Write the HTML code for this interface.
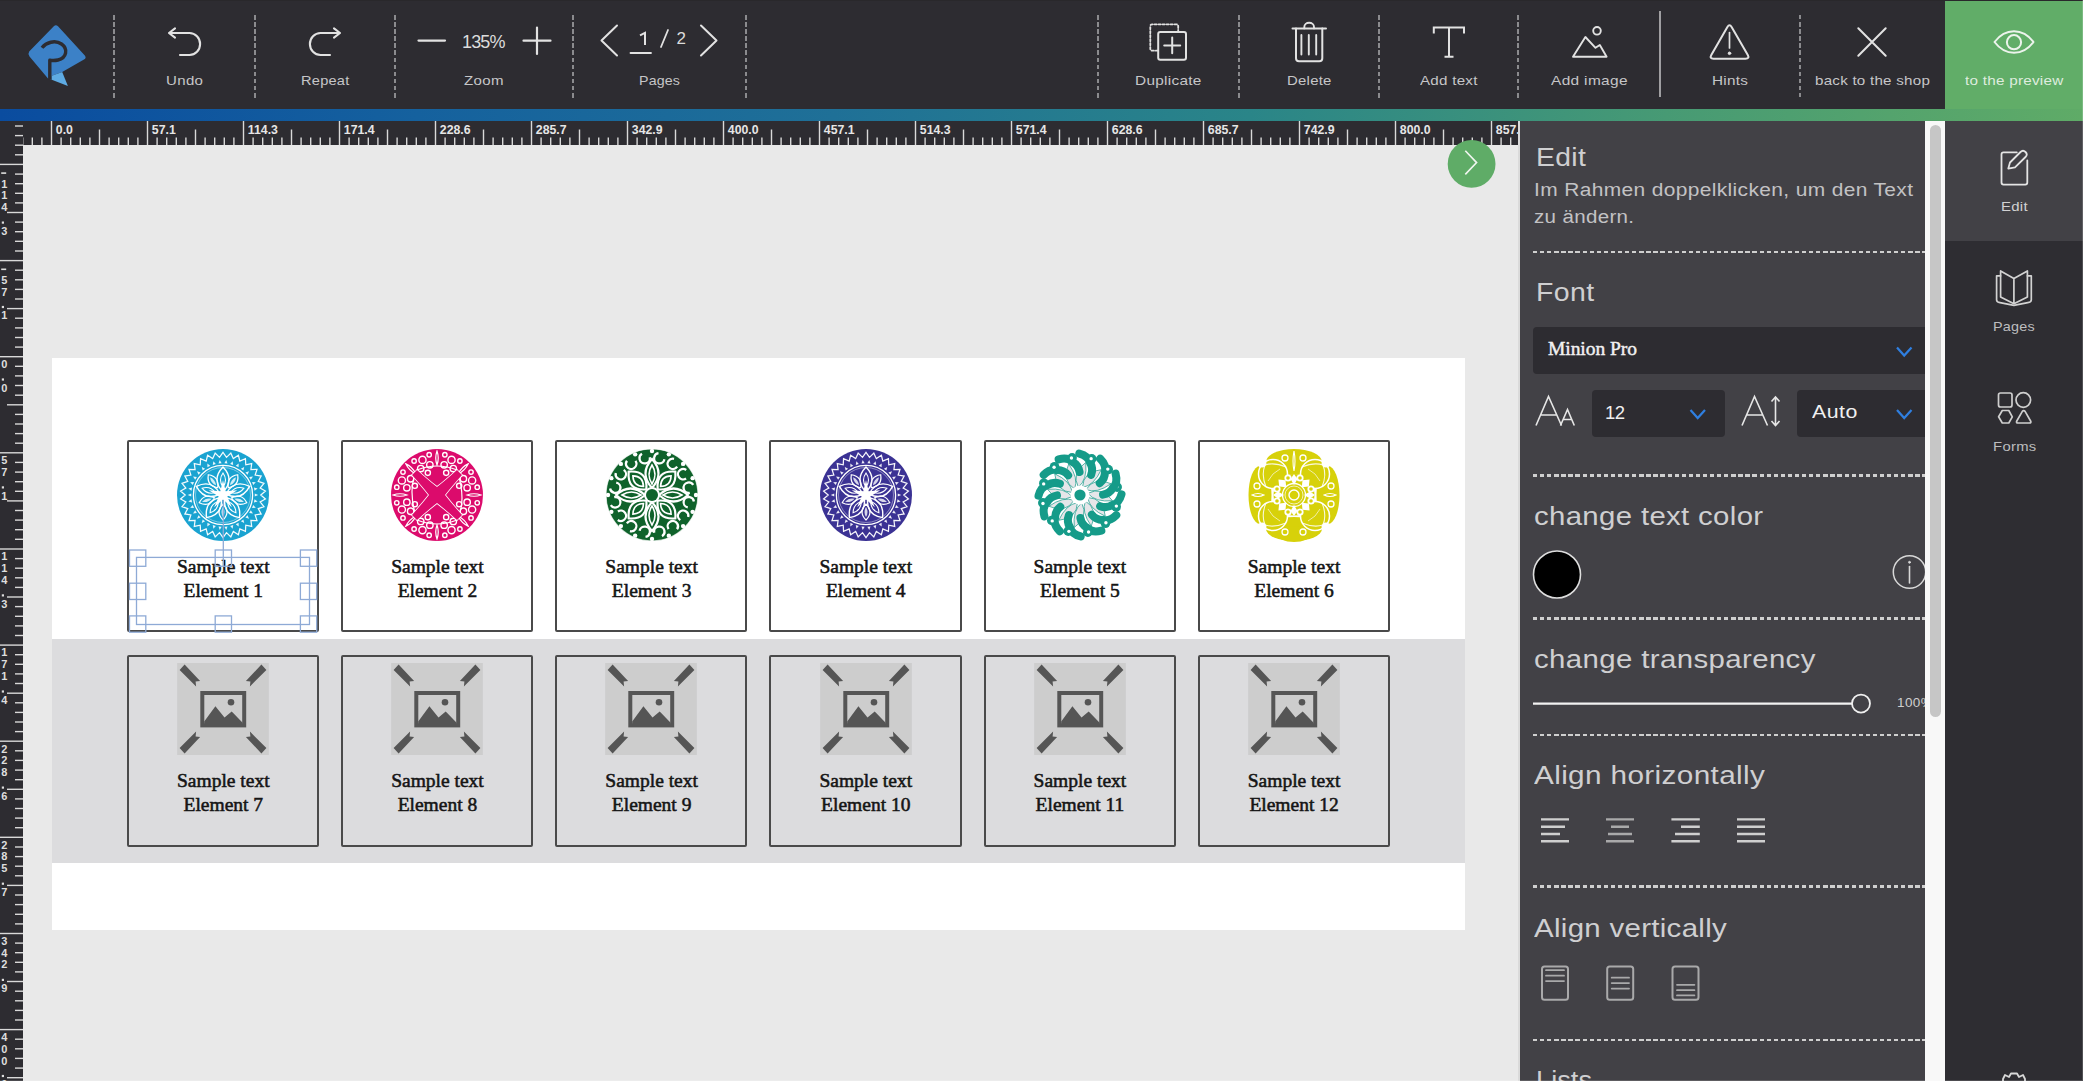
<!DOCTYPE html>
<html><head><meta charset="utf-8"><title>Editor</title>
<style>
html,body{margin:0;padding:0;}
body{width:2083px;height:1081px;overflow:hidden;position:relative;background:#e9e9e9;font-family:"Liberation Sans",sans-serif;}
.a{position:absolute;}
.t{position:absolute;white-space:nowrap;line-height:1;}
#top{left:0;top:0;width:2083px;height:109px;background:#2d2c31;border-top:1px solid #29282b;box-sizing:border-box;}
#prev{left:1945px;top:1px;width:138px;height:108px;background:#61ad68;}
#grad{left:0;top:109px;width:2083px;height:12px;background:linear-gradient(to right,#0a4c9f 0%,#15619e 20%,#1f7097 40%,#2a8588 60%,#479a74 80%,#5fab67 100%);}
.hr{position:absolute;left:0;top:121px;background:#2d2c31;}
.hr line,.vr line{stroke:#d9d9d9;stroke-width:1.4;}
.hr text{font-family:"Liberation Sans",sans-serif;font-weight:bold;font-size:12.3px;fill:#e6e6e6;}
.vr{position:absolute;left:0;top:121px;background:#2d2c31;}
.vr text{font-family:"Liberation Sans",sans-serif;font-weight:bold;font-size:11px;fill:#dedede;}
.sep{position:absolute;width:2px;background:repeating-linear-gradient(to bottom,#8b8b8e 0,#8b8b8e 4.5px,transparent 4.5px,transparent 7.1px);}
.lbl{position:absolute;white-space:nowrap;line-height:1;font-size:13px;color:#d4d4d6;}
.ic{position:absolute;overflow:visible;}
.ic{fill:none;stroke:#e2e2e2;stroke-width:2;stroke-linecap:round;stroke-linejoin:round;}
#canvas{left:23px;top:145px;width:1495px;height:936px;background:#e9e9e9;}
#page{left:52px;top:358px;width:1413px;height:572px;background:#fff;}
#band{left:52px;top:639px;width:1413px;height:224px;background:#dcdcde;}
.card{position:absolute;width:188.2px;height:188.2px;border:2.3px solid #4a4a4a;border-radius:2px;}
.st{position:absolute;width:192px;text-align:center;font-family:"Liberation Serif",serif;font-size:19.5px;line-height:24px;color:#1a1a1a;}
#panel{left:1520px;top:121px;width:405px;height:960px;background:#424146;}
#strip{left:1518px;top:121px;width:2px;height:960px;background:#dadada;}
#sbar{left:1925px;top:121px;width:20px;height:960px;background:#f8f8f8;}
#thumb{left:1930px;top:125px;width:11px;height:592px;background:#c6c6c6;border-radius:6px;}
#side{left:1945px;top:121px;width:138px;height:960px;background:#2e2d32;}
#sideedit{left:1945px;top:121px;width:138px;height:120px;background:#424146;}
.ph{position:absolute;color:#e4e4e4;white-space:nowrap;line-height:1;}
.dash{position:absolute;left:1533px;width:392px;height:2.5px;background:repeating-linear-gradient(to right,#cfcfcf 0,#cfcfcf 4.3px,transparent 4.3px,transparent 7.08px);}
.sel{position:absolute;border-radius:4px;background:#2d2c31;}
</style></head><body>
<div class="a" id="top"></div>
<div class="a" id="prev"></div>
<div class="a" id="grad"></div>
<svg class="ic" style="left:0;top:0" width="2083" height="109" viewBox="0 0 2083 109">
<g transform="translate(20,15)" style="stroke:none">
 <path d="M9.2,36.6 L33.8,11.2 Q35.9,9.3 38,11.2 L64.8,40.5 Q66.8,43 64,44.5 L42.2,57 L31.8,60.8 L31.8,64.8 L28,63.5 L9.5,41.4 Q7.6,39 9.2,36.6 Z" style="fill:#3c81c7;stroke:none"/>
 <path d="M31.8,60.8 L42.2,57 L47.9,70.9 L31.8,64.8 Z" style="fill:#5eabe3;stroke:none"/>
 <path d="M22,32.8 C26,27.5 35,24.5 41.5,29 C48.5,34 46.5,43.2 38,45 C35,45.7 32,45.6 29.8,45.2 L29.8,64.5" style="fill:none;stroke:#2d2c31;stroke-width:3.4;stroke-linecap:butt"/>
</g>
<path d="M169,33 H189.5 A10.6,11 0 0 1 189.5,55 H180 M175,28.4 L169,33 L175,37.6" style="stroke-width:2.1"/>
<path d="M340,33 H320.5 A10.6,11 0 0 0 320.5,55 H330 M334,28.4 L340,33 L334,37.6" style="stroke-width:2.1"/>
<path d="M418.5,40.6 H445" style="stroke-width:2.2"/>
<path d="M523.5,40.7 H550.5 M537,27.5 V54" style="stroke-width:2.2"/>
<path d="M617,25.5 L601.5,40.5 L617,55.5" style="stroke-width:2"/>
<path d="M701,25.5 L716.5,40.5 L701,55.5" style="stroke-width:2"/>
<path d="M630.5,53 H651" style="stroke-width:1.8"/>
<path d="M640,35.3 L645,32.8 V45" style="stroke-width:2;stroke-linecap:butt;stroke-linejoin:miter"/>
<path d="M661,47 L668,30" style="stroke-width:1.8"/>
<!-- duplicate -->
<path d="M1158,50.7 H1152.3 Q1150.3,50.7 1150.3,48.7 V26.3 Q1150.3,24.3 1152.3,24.3 H1176.2 Q1178.2,24.3 1178.2,26.3 V32" style="stroke-dasharray:2.2 1.8;stroke-width:1.8"/>
<rect x="1158.2" y="32.1" width="27.8" height="27.7" rx="2" style="stroke-width:2"/>
<path d="M1164.2,45.4 H1180.2 M1172.2,37.6 V53.2" style="stroke-width:2"/>
<!-- trash -->
<path d="M1292.5,28.6 H1326" style="stroke-width:2"/>
<path d="M1304.3,28.4 V27 A4.85,4.2 0 0 1 1314,27 V28.4" style="stroke-width:1.9"/>
<path d="M1296,28.6 L1296,58.3 Q1296,61.2 1299,61.2 H1319.3 Q1322.3,61.2 1322.3,58.3 V28.6" style="stroke-width:2"/>
<path d="M1301.4,35 V54.5 M1308.8,35 V54.5 M1316.2,35 V54.5" style="stroke-width:1.9"/>
<!-- T -->
<path d="M1433.8,33.5 V27.5 H1464 V33.5 M1449,27.5 V56.8 M1444.5,56.8 H1453.5" style="stroke-width:2;stroke-linecap:butt;stroke-linejoin:miter"/>
<!-- add image -->
<path d="M1573,56.8 L1585.4,37 L1595.5,47.8 L1599.8,45 L1606.6,56.8 Z" style="stroke-width:1.9"/>
<circle cx="1597" cy="30.8" r="3.8" style="stroke-width:1.9"/>
<!-- hints -->
<path d="M1727.4,27 Q1729.5,23.6 1731.6,27 L1747.8,55 Q1749.8,58.8 1745.5,58.8 H1713.5 Q1709.3,58.8 1711.3,55 Z" style="stroke-width:2"/>
<path d="M1729.5,32.5 V48" style="stroke-width:1.7"/>
<circle cx="1729.5" cy="53.3" r="1.3" style="fill:#e2e2e2;stroke-width:1"/>
<!-- X -->
<path d="M1858.3,28.3 L1885.7,55.7 M1885.7,28.3 L1858.3,55.7" style="stroke-width:2"/>
<!-- eye -->
<path d="M1994.5,42 C2001,33.5 2008,31.3 2014,31.3 C2020,31.3 2027,33.5 2033.5,42 C2027,50.5 2020,52.8 2014,52.8 C2008,52.8 2001,50.5 1994.5,42 Z" style="stroke-width:2;stroke:#ecf3ec"/>
<circle cx="2014" cy="42.2" r="7.1" style="stroke-width:2;stroke:#ecf3ec"/>
<line x1="1660" y1="11" x2="1660" y2="97" style="stroke:#bdbdbf;stroke-width:1.6;stroke-linecap:butt"/>
</svg>
<div class="sep" style="left:113.0px;top:14.5px;height:83px"></div>
<div class="sep" style="left:254.0px;top:14.5px;height:83px"></div>
<div class="sep" style="left:394.0px;top:14.5px;height:83px"></div>
<div class="sep" style="left:571.5px;top:14.5px;height:83px"></div>
<div class="sep" style="left:745.0px;top:14.5px;height:83px"></div>
<div class="sep" style="left:1096.5px;top:14.5px;height:83px"></div>
<div class="sep" style="left:1238.0px;top:14.5px;height:83px"></div>
<div class="sep" style="left:1378.0px;top:14.5px;height:83px"></div>
<div class="sep" style="left:1517.3px;top:14.5px;height:83px"></div>
<div class="sep" style="left:1799px;top:15px;height:82px"></div>
<div class="t" style="left:166.00px;top:74.23px;font-family:'Liberation Sans',sans-serif;font-weight:normal;font-size:13.2px;letter-spacing:0.319px;color:#c6c6c8;transform:scaleX(1.1382);transform-origin:0 0;">Undo</div>
<div class="t" style="left:300.70px;top:74.23px;font-family:'Liberation Sans',sans-serif;font-weight:normal;font-size:13.2px;letter-spacing:0.208px;color:#c6c6c8;transform:scaleX(1.1081);transform-origin:0 0;">Repeat</div>
<div class="t" style="left:464.00px;top:74.23px;font-family:'Liberation Sans',sans-serif;font-weight:normal;font-size:13.2px;letter-spacing:0.348px;color:#c6c6c8;transform:scaleX(1.1410);transform-origin:0 0;">Zoom</div>
<div class="t" style="left:639.00px;top:74.23px;font-family:'Liberation Sans',sans-serif;font-weight:normal;font-size:13.2px;letter-spacing:0.165px;color:#c6c6c8;transform:scaleX(1.0758);transform-origin:0 0;">Pages</div>
<div class="t" style="left:1135.00px;top:74.23px;font-family:'Liberation Sans',sans-serif;font-weight:normal;font-size:13.2px;letter-spacing:0.245px;color:#c6c6c8;transform:scaleX(1.1664);transform-origin:0 0;">Duplicate</div>
<div class="t" style="left:1286.60px;top:74.23px;font-family:'Liberation Sans',sans-serif;font-weight:normal;font-size:13.2px;letter-spacing:0.221px;color:#c6c6c8;transform:scaleX(1.1311);transform-origin:0 0;">Delete</div>
<div class="t" style="left:1420.00px;top:74.23px;font-family:'Liberation Sans',sans-serif;font-weight:normal;font-size:13.2px;letter-spacing:0.225px;color:#c6c6c8;transform:scaleX(1.1494);transform-origin:0 0;">Add text</div>
<div class="t" style="left:1551.00px;top:74.23px;font-family:'Liberation Sans',sans-serif;font-weight:normal;font-size:13.2px;letter-spacing:0.288px;color:#c6c6c8;transform:scaleX(1.1712);transform-origin:0 0;">Add image</div>
<div class="t" style="left:1712.00px;top:74.23px;font-family:'Liberation Sans',sans-serif;font-weight:normal;font-size:13.2px;letter-spacing:0.257px;color:#c6c6c8;transform:scaleX(1.1584);transform-origin:0 0;">Hints</div>
<div class="t" style="left:1814.60px;top:74.23px;font-family:'Liberation Sans',sans-serif;font-weight:normal;font-size:13.2px;letter-spacing:0.209px;color:#c6c6c8;transform:scaleX(1.1491);transform-origin:0 0;">back to the shop</div>
<div class="t" style="left:1964.60px;top:74.23px;font-family:'Liberation Sans',sans-serif;font-weight:normal;font-size:13.2px;letter-spacing:0.215px;color:#deecdf;transform:scaleX(1.1571);transform-origin:0 0;">to the preview</div>
<div class="t" style="left:462.00px;top:33.16px;font-family:'Liberation Sans',sans-serif;font-weight:normal;font-size:18px;letter-spacing:-0.850px;color:#dcdcdc;">135%</div>
<div class="t" style="left:676.50px;top:30.31px;font-family:'Liberation Sans',sans-serif;font-weight:normal;font-size:17px;letter-spacing:0.000px;color:#dcdcdc;">2</div>
<svg class="hr" width="1518" height="24" viewBox="0 0 1518 24"><line x1="22.7" y1="16.5" x2="22.7" y2="24"/>
<line x1="32.3" y1="16.5" x2="32.3" y2="24"/>
<line x1="41.9" y1="16.5" x2="41.9" y2="24"/>
<line x1="51.5" y1="0" x2="51.5" y2="24"/>
<text x="55.8" y="13.2">0.0</text>
<line x1="61.1" y1="16.5" x2="61.1" y2="24"/>
<line x1="70.7" y1="16.5" x2="70.7" y2="24"/>
<line x1="80.3" y1="16.5" x2="80.3" y2="24"/>
<line x1="89.9" y1="16.5" x2="89.9" y2="24"/>
<line x1="99.5" y1="8.5" x2="99.5" y2="24"/>
<line x1="109.1" y1="16.5" x2="109.1" y2="24"/>
<line x1="118.7" y1="16.5" x2="118.7" y2="24"/>
<line x1="128.3" y1="16.5" x2="128.3" y2="24"/>
<line x1="137.9" y1="16.5" x2="137.9" y2="24"/>
<line x1="147.5" y1="0" x2="147.5" y2="24"/>
<text x="151.8" y="13.2">57.1</text>
<line x1="157.1" y1="16.5" x2="157.1" y2="24"/>
<line x1="166.7" y1="16.5" x2="166.7" y2="24"/>
<line x1="176.3" y1="16.5" x2="176.3" y2="24"/>
<line x1="185.9" y1="16.5" x2="185.9" y2="24"/>
<line x1="195.5" y1="8.5" x2="195.5" y2="24"/>
<line x1="205.1" y1="16.5" x2="205.1" y2="24"/>
<line x1="214.7" y1="16.5" x2="214.7" y2="24"/>
<line x1="224.3" y1="16.5" x2="224.3" y2="24"/>
<line x1="233.9" y1="16.5" x2="233.9" y2="24"/>
<line x1="243.5" y1="0" x2="243.5" y2="24"/>
<text x="247.8" y="13.2">114.3</text>
<line x1="253.1" y1="16.5" x2="253.1" y2="24"/>
<line x1="262.7" y1="16.5" x2="262.7" y2="24"/>
<line x1="272.3" y1="16.5" x2="272.3" y2="24"/>
<line x1="281.9" y1="16.5" x2="281.9" y2="24"/>
<line x1="291.5" y1="8.5" x2="291.5" y2="24"/>
<line x1="301.1" y1="16.5" x2="301.1" y2="24"/>
<line x1="310.7" y1="16.5" x2="310.7" y2="24"/>
<line x1="320.3" y1="16.5" x2="320.3" y2="24"/>
<line x1="329.9" y1="16.5" x2="329.9" y2="24"/>
<line x1="339.5" y1="0" x2="339.5" y2="24"/>
<text x="343.8" y="13.2">171.4</text>
<line x1="349.1" y1="16.5" x2="349.1" y2="24"/>
<line x1="358.7" y1="16.5" x2="358.7" y2="24"/>
<line x1="368.3" y1="16.5" x2="368.3" y2="24"/>
<line x1="377.9" y1="16.5" x2="377.9" y2="24"/>
<line x1="387.5" y1="8.5" x2="387.5" y2="24"/>
<line x1="397.1" y1="16.5" x2="397.1" y2="24"/>
<line x1="406.7" y1="16.5" x2="406.7" y2="24"/>
<line x1="416.3" y1="16.5" x2="416.3" y2="24"/>
<line x1="425.9" y1="16.5" x2="425.9" y2="24"/>
<line x1="435.5" y1="0" x2="435.5" y2="24"/>
<text x="439.8" y="13.2">228.6</text>
<line x1="445.1" y1="16.5" x2="445.1" y2="24"/>
<line x1="454.7" y1="16.5" x2="454.7" y2="24"/>
<line x1="464.3" y1="16.5" x2="464.3" y2="24"/>
<line x1="473.9" y1="16.5" x2="473.9" y2="24"/>
<line x1="483.5" y1="8.5" x2="483.5" y2="24"/>
<line x1="493.1" y1="16.5" x2="493.1" y2="24"/>
<line x1="502.7" y1="16.5" x2="502.7" y2="24"/>
<line x1="512.3" y1="16.5" x2="512.3" y2="24"/>
<line x1="521.9" y1="16.5" x2="521.9" y2="24"/>
<line x1="531.5" y1="0" x2="531.5" y2="24"/>
<text x="535.8" y="13.2">285.7</text>
<line x1="541.1" y1="16.5" x2="541.1" y2="24"/>
<line x1="550.7" y1="16.5" x2="550.7" y2="24"/>
<line x1="560.3" y1="16.5" x2="560.3" y2="24"/>
<line x1="569.9" y1="16.5" x2="569.9" y2="24"/>
<line x1="579.5" y1="8.5" x2="579.5" y2="24"/>
<line x1="589.1" y1="16.5" x2="589.1" y2="24"/>
<line x1="598.7" y1="16.5" x2="598.7" y2="24"/>
<line x1="608.3" y1="16.5" x2="608.3" y2="24"/>
<line x1="617.9" y1="16.5" x2="617.9" y2="24"/>
<line x1="627.5" y1="0" x2="627.5" y2="24"/>
<text x="631.8" y="13.2">342.9</text>
<line x1="637.1" y1="16.5" x2="637.1" y2="24"/>
<line x1="646.7" y1="16.5" x2="646.7" y2="24"/>
<line x1="656.3" y1="16.5" x2="656.3" y2="24"/>
<line x1="665.9" y1="16.5" x2="665.9" y2="24"/>
<line x1="675.5" y1="8.5" x2="675.5" y2="24"/>
<line x1="685.1" y1="16.5" x2="685.1" y2="24"/>
<line x1="694.7" y1="16.5" x2="694.7" y2="24"/>
<line x1="704.3" y1="16.5" x2="704.3" y2="24"/>
<line x1="713.9" y1="16.5" x2="713.9" y2="24"/>
<line x1="723.5" y1="0" x2="723.5" y2="24"/>
<text x="727.8" y="13.2">400.0</text>
<line x1="733.1" y1="16.5" x2="733.1" y2="24"/>
<line x1="742.7" y1="16.5" x2="742.7" y2="24"/>
<line x1="752.3" y1="16.5" x2="752.3" y2="24"/>
<line x1="761.9" y1="16.5" x2="761.9" y2="24"/>
<line x1="771.5" y1="8.5" x2="771.5" y2="24"/>
<line x1="781.1" y1="16.5" x2="781.1" y2="24"/>
<line x1="790.7" y1="16.5" x2="790.7" y2="24"/>
<line x1="800.3" y1="16.5" x2="800.3" y2="24"/>
<line x1="809.9" y1="16.5" x2="809.9" y2="24"/>
<line x1="819.5" y1="0" x2="819.5" y2="24"/>
<text x="823.8" y="13.2">457.1</text>
<line x1="829.1" y1="16.5" x2="829.1" y2="24"/>
<line x1="838.7" y1="16.5" x2="838.7" y2="24"/>
<line x1="848.3" y1="16.5" x2="848.3" y2="24"/>
<line x1="857.9" y1="16.5" x2="857.9" y2="24"/>
<line x1="867.5" y1="8.5" x2="867.5" y2="24"/>
<line x1="877.1" y1="16.5" x2="877.1" y2="24"/>
<line x1="886.7" y1="16.5" x2="886.7" y2="24"/>
<line x1="896.3" y1="16.5" x2="896.3" y2="24"/>
<line x1="905.9" y1="16.5" x2="905.9" y2="24"/>
<line x1="915.5" y1="0" x2="915.5" y2="24"/>
<text x="919.8" y="13.2">514.3</text>
<line x1="925.1" y1="16.5" x2="925.1" y2="24"/>
<line x1="934.7" y1="16.5" x2="934.7" y2="24"/>
<line x1="944.3" y1="16.5" x2="944.3" y2="24"/>
<line x1="953.9" y1="16.5" x2="953.9" y2="24"/>
<line x1="963.5" y1="8.5" x2="963.5" y2="24"/>
<line x1="973.1" y1="16.5" x2="973.1" y2="24"/>
<line x1="982.7" y1="16.5" x2="982.7" y2="24"/>
<line x1="992.3" y1="16.5" x2="992.3" y2="24"/>
<line x1="1001.9" y1="16.5" x2="1001.9" y2="24"/>
<line x1="1011.5" y1="0" x2="1011.5" y2="24"/>
<text x="1015.8" y="13.2">571.4</text>
<line x1="1021.1" y1="16.5" x2="1021.1" y2="24"/>
<line x1="1030.7" y1="16.5" x2="1030.7" y2="24"/>
<line x1="1040.3" y1="16.5" x2="1040.3" y2="24"/>
<line x1="1049.9" y1="16.5" x2="1049.9" y2="24"/>
<line x1="1059.5" y1="8.5" x2="1059.5" y2="24"/>
<line x1="1069.1" y1="16.5" x2="1069.1" y2="24"/>
<line x1="1078.7" y1="16.5" x2="1078.7" y2="24"/>
<line x1="1088.3" y1="16.5" x2="1088.3" y2="24"/>
<line x1="1097.9" y1="16.5" x2="1097.9" y2="24"/>
<line x1="1107.5" y1="0" x2="1107.5" y2="24"/>
<text x="1111.8" y="13.2">628.6</text>
<line x1="1117.1" y1="16.5" x2="1117.1" y2="24"/>
<line x1="1126.7" y1="16.5" x2="1126.7" y2="24"/>
<line x1="1136.3" y1="16.5" x2="1136.3" y2="24"/>
<line x1="1145.9" y1="16.5" x2="1145.9" y2="24"/>
<line x1="1155.5" y1="8.5" x2="1155.5" y2="24"/>
<line x1="1165.1" y1="16.5" x2="1165.1" y2="24"/>
<line x1="1174.7" y1="16.5" x2="1174.7" y2="24"/>
<line x1="1184.3" y1="16.5" x2="1184.3" y2="24"/>
<line x1="1193.9" y1="16.5" x2="1193.9" y2="24"/>
<line x1="1203.5" y1="0" x2="1203.5" y2="24"/>
<text x="1207.8" y="13.2">685.7</text>
<line x1="1213.1" y1="16.5" x2="1213.1" y2="24"/>
<line x1="1222.7" y1="16.5" x2="1222.7" y2="24"/>
<line x1="1232.3" y1="16.5" x2="1232.3" y2="24"/>
<line x1="1241.9" y1="16.5" x2="1241.9" y2="24"/>
<line x1="1251.5" y1="8.5" x2="1251.5" y2="24"/>
<line x1="1261.1" y1="16.5" x2="1261.1" y2="24"/>
<line x1="1270.7" y1="16.5" x2="1270.7" y2="24"/>
<line x1="1280.3" y1="16.5" x2="1280.3" y2="24"/>
<line x1="1289.9" y1="16.5" x2="1289.9" y2="24"/>
<line x1="1299.5" y1="0" x2="1299.5" y2="24"/>
<text x="1303.8" y="13.2">742.9</text>
<line x1="1309.1" y1="16.5" x2="1309.1" y2="24"/>
<line x1="1318.7" y1="16.5" x2="1318.7" y2="24"/>
<line x1="1328.3" y1="16.5" x2="1328.3" y2="24"/>
<line x1="1337.9" y1="16.5" x2="1337.9" y2="24"/>
<line x1="1347.5" y1="8.5" x2="1347.5" y2="24"/>
<line x1="1357.1" y1="16.5" x2="1357.1" y2="24"/>
<line x1="1366.7" y1="16.5" x2="1366.7" y2="24"/>
<line x1="1376.3" y1="16.5" x2="1376.3" y2="24"/>
<line x1="1385.9" y1="16.5" x2="1385.9" y2="24"/>
<line x1="1395.5" y1="0" x2="1395.5" y2="24"/>
<text x="1399.8" y="13.2">800.0</text>
<line x1="1405.1" y1="16.5" x2="1405.1" y2="24"/>
<line x1="1414.7" y1="16.5" x2="1414.7" y2="24"/>
<line x1="1424.3" y1="16.5" x2="1424.3" y2="24"/>
<line x1="1433.9" y1="16.5" x2="1433.9" y2="24"/>
<line x1="1443.5" y1="8.5" x2="1443.5" y2="24"/>
<line x1="1453.1" y1="16.5" x2="1453.1" y2="24"/>
<line x1="1462.7" y1="16.5" x2="1462.7" y2="24"/>
<line x1="1472.3" y1="16.5" x2="1472.3" y2="24"/>
<line x1="1481.9" y1="16.5" x2="1481.9" y2="24"/>
<line x1="1491.5" y1="0" x2="1491.5" y2="24"/>
<text x="1495.8" y="13.2">857.1</text>
<line x1="1501.1" y1="16.5" x2="1501.1" y2="24"/>
<line x1="1510.7" y1="16.5" x2="1510.7" y2="24"/></svg>
<svg class="vr" width="23" height="960" viewBox="0 0 23 960"><line x1="0" y1="-52.7" x2="23" y2="-52.7"/>
<line x1="15" y1="-43.1" x2="23" y2="-43.1"/>
<line x1="15" y1="-33.5" x2="23" y2="-33.5"/>
<line x1="15" y1="-23.9" x2="23" y2="-23.9"/>
<line x1="15" y1="-14.2" x2="23" y2="-14.2"/>
<line x1="7" y1="-4.6" x2="23" y2="-4.6"/>
<line x1="15" y1="5.0" x2="23" y2="5.0"/>
<line x1="15" y1="14.6" x2="23" y2="14.6"/>
<line x1="15" y1="24.2" x2="23" y2="24.2"/>
<line x1="15" y1="33.8" x2="23" y2="33.8"/>
<line x1="0" y1="43.4" x2="23" y2="43.4"/>
<rect x="1.2" y="51.3" width="5" height="1.6" fill="#dcdcdc"/>
<text x="1.2" y="66.5">1</text>
<text x="1.2" y="78.3">1</text>
<text x="1.2" y="90.1">4</text>
<rect x="1.8" y="100.5" width="2.2" height="2.2" fill="#dcdcdc"/>
<text x="1.2" y="113.7">3</text>
<line x1="15" y1="53.1" x2="23" y2="53.1"/>
<line x1="15" y1="62.7" x2="23" y2="62.7"/>
<line x1="15" y1="72.3" x2="23" y2="72.3"/>
<line x1="15" y1="81.9" x2="23" y2="81.9"/>
<line x1="7" y1="91.5" x2="23" y2="91.5"/>
<line x1="15" y1="101.1" x2="23" y2="101.1"/>
<line x1="15" y1="110.7" x2="23" y2="110.7"/>
<line x1="15" y1="120.3" x2="23" y2="120.3"/>
<line x1="15" y1="130.0" x2="23" y2="130.0"/>
<line x1="0" y1="139.6" x2="23" y2="139.6"/>
<rect x="1.2" y="147.5" width="5" height="1.6" fill="#dcdcdc"/>
<text x="1.2" y="162.7">5</text>
<text x="1.2" y="174.5">7</text>
<rect x="1.8" y="184.9" width="2.2" height="2.2" fill="#dcdcdc"/>
<text x="1.2" y="198.1">1</text>
<line x1="15" y1="149.2" x2="23" y2="149.2"/>
<line x1="15" y1="158.8" x2="23" y2="158.8"/>
<line x1="15" y1="168.4" x2="23" y2="168.4"/>
<line x1="15" y1="178.0" x2="23" y2="178.0"/>
<line x1="7" y1="187.6" x2="23" y2="187.6"/>
<line x1="15" y1="197.2" x2="23" y2="197.2"/>
<line x1="15" y1="206.9" x2="23" y2="206.9"/>
<line x1="15" y1="216.5" x2="23" y2="216.5"/>
<line x1="15" y1="226.1" x2="23" y2="226.1"/>
<line x1="0" y1="235.7" x2="23" y2="235.7"/>
<text x="1.2" y="247.0">0</text>
<rect x="1.8" y="257.4" width="2.2" height="2.2" fill="#dcdcdc"/>
<text x="1.2" y="270.6">0</text>
<line x1="15" y1="245.3" x2="23" y2="245.3"/>
<line x1="15" y1="254.9" x2="23" y2="254.9"/>
<line x1="15" y1="264.5" x2="23" y2="264.5"/>
<line x1="15" y1="274.2" x2="23" y2="274.2"/>
<line x1="7" y1="283.8" x2="23" y2="283.8"/>
<line x1="15" y1="293.4" x2="23" y2="293.4"/>
<line x1="15" y1="303.0" x2="23" y2="303.0"/>
<line x1="15" y1="312.6" x2="23" y2="312.6"/>
<line x1="15" y1="322.2" x2="23" y2="322.2"/>
<line x1="0" y1="331.8" x2="23" y2="331.8"/>
<text x="1.2" y="343.1">5</text>
<text x="1.2" y="354.9">7</text>
<rect x="1.8" y="365.3" width="2.2" height="2.2" fill="#dcdcdc"/>
<text x="1.2" y="378.5">1</text>
<line x1="15" y1="341.4" x2="23" y2="341.4"/>
<line x1="15" y1="351.1" x2="23" y2="351.1"/>
<line x1="15" y1="360.7" x2="23" y2="360.7"/>
<line x1="15" y1="370.3" x2="23" y2="370.3"/>
<line x1="7" y1="379.9" x2="23" y2="379.9"/>
<line x1="15" y1="389.5" x2="23" y2="389.5"/>
<line x1="15" y1="399.1" x2="23" y2="399.1"/>
<line x1="15" y1="408.7" x2="23" y2="408.7"/>
<line x1="15" y1="418.3" x2="23" y2="418.3"/>
<line x1="0" y1="428.0" x2="23" y2="428.0"/>
<text x="1.2" y="439.3">1</text>
<text x="1.2" y="451.1">1</text>
<text x="1.2" y="462.9">4</text>
<rect x="1.8" y="473.3" width="2.2" height="2.2" fill="#dcdcdc"/>
<text x="1.2" y="486.5">3</text>
<line x1="15" y1="437.6" x2="23" y2="437.6"/>
<line x1="15" y1="447.2" x2="23" y2="447.2"/>
<line x1="15" y1="456.8" x2="23" y2="456.8"/>
<line x1="15" y1="466.4" x2="23" y2="466.4"/>
<line x1="7" y1="476.0" x2="23" y2="476.0"/>
<line x1="15" y1="485.6" x2="23" y2="485.6"/>
<line x1="15" y1="495.3" x2="23" y2="495.3"/>
<line x1="15" y1="504.9" x2="23" y2="504.9"/>
<line x1="15" y1="514.5" x2="23" y2="514.5"/>
<line x1="0" y1="524.1" x2="23" y2="524.1"/>
<text x="1.2" y="535.4">1</text>
<text x="1.2" y="547.2">7</text>
<text x="1.2" y="559.0">1</text>
<rect x="1.8" y="569.4" width="2.2" height="2.2" fill="#dcdcdc"/>
<text x="1.2" y="582.6">4</text>
<line x1="15" y1="533.7" x2="23" y2="533.7"/>
<line x1="15" y1="543.3" x2="23" y2="543.3"/>
<line x1="15" y1="552.9" x2="23" y2="552.9"/>
<line x1="15" y1="562.5" x2="23" y2="562.5"/>
<line x1="7" y1="572.2" x2="23" y2="572.2"/>
<line x1="15" y1="581.8" x2="23" y2="581.8"/>
<line x1="15" y1="591.4" x2="23" y2="591.4"/>
<line x1="15" y1="601.0" x2="23" y2="601.0"/>
<line x1="15" y1="610.6" x2="23" y2="610.6"/>
<line x1="0" y1="620.2" x2="23" y2="620.2"/>
<text x="1.2" y="631.5">2</text>
<text x="1.2" y="643.3">2</text>
<text x="1.2" y="655.1">8</text>
<rect x="1.8" y="665.5" width="2.2" height="2.2" fill="#dcdcdc"/>
<text x="1.2" y="678.7">6</text>
<line x1="15" y1="629.8" x2="23" y2="629.8"/>
<line x1="15" y1="639.4" x2="23" y2="639.4"/>
<line x1="15" y1="649.1" x2="23" y2="649.1"/>
<line x1="15" y1="658.7" x2="23" y2="658.7"/>
<line x1="7" y1="668.3" x2="23" y2="668.3"/>
<line x1="15" y1="677.9" x2="23" y2="677.9"/>
<line x1="15" y1="687.5" x2="23" y2="687.5"/>
<line x1="15" y1="697.1" x2="23" y2="697.1"/>
<line x1="15" y1="706.7" x2="23" y2="706.7"/>
<line x1="0" y1="716.3" x2="23" y2="716.3"/>
<text x="1.2" y="727.6">2</text>
<text x="1.2" y="739.4">8</text>
<text x="1.2" y="751.2">5</text>
<rect x="1.8" y="761.6" width="2.2" height="2.2" fill="#dcdcdc"/>
<text x="1.2" y="774.8">7</text>
<line x1="15" y1="726.0" x2="23" y2="726.0"/>
<line x1="15" y1="735.6" x2="23" y2="735.6"/>
<line x1="15" y1="745.2" x2="23" y2="745.2"/>
<line x1="15" y1="754.8" x2="23" y2="754.8"/>
<line x1="7" y1="764.4" x2="23" y2="764.4"/>
<line x1="15" y1="774.0" x2="23" y2="774.0"/>
<line x1="15" y1="783.6" x2="23" y2="783.6"/>
<line x1="15" y1="793.3" x2="23" y2="793.3"/>
<line x1="15" y1="802.9" x2="23" y2="802.9"/>
<line x1="0" y1="812.5" x2="23" y2="812.5"/>
<text x="1.2" y="823.8">3</text>
<text x="1.2" y="835.6">4</text>
<text x="1.2" y="847.4">2</text>
<rect x="1.8" y="857.8" width="2.2" height="2.2" fill="#dcdcdc"/>
<text x="1.2" y="871.0">9</text>
<line x1="15" y1="822.1" x2="23" y2="822.1"/>
<line x1="15" y1="831.7" x2="23" y2="831.7"/>
<line x1="15" y1="841.3" x2="23" y2="841.3"/>
<line x1="15" y1="850.9" x2="23" y2="850.9"/>
<line x1="7" y1="860.5" x2="23" y2="860.5"/>
<line x1="15" y1="870.2" x2="23" y2="870.2"/>
<line x1="15" y1="879.8" x2="23" y2="879.8"/>
<line x1="15" y1="889.4" x2="23" y2="889.4"/>
<line x1="15" y1="899.0" x2="23" y2="899.0"/>
<line x1="0" y1="908.6" x2="23" y2="908.6"/>
<text x="1.2" y="919.9">4</text>
<text x="1.2" y="931.7">0</text>
<text x="1.2" y="943.5">0</text>
<rect x="1.8" y="953.9" width="2.2" height="2.2" fill="#dcdcdc"/>
<text x="1.2" y="967.1">0</text>
<line x1="15" y1="918.2" x2="23" y2="918.2"/>
<line x1="15" y1="927.8" x2="23" y2="927.8"/>
<line x1="15" y1="937.4" x2="23" y2="937.4"/>
<line x1="15" y1="947.1" x2="23" y2="947.1"/>
<line x1="7" y1="956.7" x2="23" y2="956.7"/>
<line x1="15" y1="966.3" x2="23" y2="966.3"/>
<line x1="15" y1="975.9" x2="23" y2="975.9"/>
<line x1="15" y1="985.5" x2="23" y2="985.5"/>
<line x1="15" y1="995.1" x2="23" y2="995.1"/>
<line x1="0" y1="1004.7" x2="23" y2="1004.7"/>
<text x="1.2" y="1016.0">4</text>
<text x="1.2" y="1027.8">5</text>
<text x="1.2" y="1039.6">7</text>
<rect x="1.8" y="1050.0" width="2.2" height="2.2" fill="#dcdcdc"/>
<text x="1.2" y="1063.2">1</text>
<line x1="15" y1="1014.4" x2="23" y2="1014.4"/>
<line x1="15" y1="1024.0" x2="23" y2="1024.0"/>
<line x1="15" y1="1033.6" x2="23" y2="1033.6"/>
<line x1="15" y1="1043.2" x2="23" y2="1043.2"/>
<line x1="7" y1="1052.8" x2="23" y2="1052.8"/>
<line x1="15" y1="1062.4" x2="23" y2="1062.4"/>
<line x1="15" y1="1072.0" x2="23" y2="1072.0"/>
<line x1="15" y1="1081.6" x2="23" y2="1081.6"/>
<line x1="15" y1="1091.3" x2="23" y2="1091.3"/></svg>
<div class="a" id="page"></div>
<div class="a" id="band"></div>
<div class="card" style="left:127.00px;top:440px"></div>
<svg class="a" style="left:175.30px;top:446.5px" width="96" height="96" viewBox="-48 -48 96 96"><circle r="46" fill="#1aa3d1"/><path d="M0.00,-42.60 L3.49,-37.64 L7.83,-41.87 L10.34,-36.36 L15.39,-39.72 L16.85,-33.84 L22.43,-36.22 L22.78,-30.17 L28.70,-31.48 L27.93,-25.47 L34.00,-25.67 L32.14,-19.90 L38.13,-18.99 L35.25,-13.65 L40.97,-11.66 L37.16,-6.95 L42.42,-3.93 L37.80,0.00 L42.42,3.93 L37.16,6.95 L40.97,11.66 L35.25,13.65 L38.13,18.99 L32.14,19.90 L34.00,25.67 L27.93,25.47 L28.70,31.48 L22.78,30.17 L22.43,36.22 L16.85,33.84 L15.39,39.72 L10.34,36.36 L7.83,41.87 L3.49,37.64 L0.00,42.60 L-3.49,37.64 L-7.83,41.87 L-10.34,36.36 L-15.39,39.72 L-16.85,33.84 L-22.43,36.22 L-22.78,30.17 L-28.70,31.48 L-27.93,25.47 L-34.00,25.67 L-32.14,19.90 L-38.13,18.99 L-35.25,13.65 L-40.97,11.66 L-37.16,6.95 L-42.42,3.93 L-37.80,0.00 L-42.42,-3.93 L-37.16,-6.95 L-40.97,-11.66 L-35.25,-13.65 L-38.13,-18.99 L-32.14,-19.90 L-34.00,-25.67 L-27.93,-25.47 L-28.70,-31.48 L-22.78,-30.17 L-22.43,-36.22 L-16.85,-33.84 L-15.39,-39.72 L-10.34,-36.36 L-7.83,-41.87 L-3.49,-37.64 Z" fill="none" stroke="#fff" stroke-width="1.25" opacity="0.95"/><path d="M3.25,-35.05 L1.35,-31.77 L4.51,-31.48 Z" fill="#fff" opacity="0.9"/><path d="M9.63,-33.86 L7.16,-30.98 L10.22,-30.11 Z" fill="#fff" opacity="0.9"/><path d="M15.69,-31.51 L12.73,-29.14 L15.58,-27.72 Z" fill="#fff" opacity="0.9"/><path d="M21.21,-28.09 L17.87,-26.30 L20.41,-24.39 Z" fill="#fff" opacity="0.9"/><path d="M26.01,-23.71 L22.40,-22.57 L24.54,-20.22 Z" fill="#fff" opacity="0.9"/><path d="M29.93,-18.53 L26.17,-18.07 L27.84,-15.37 Z" fill="#fff" opacity="0.9"/><path d="M32.82,-12.72 L29.04,-12.96 L30.19,-9.99 Z" fill="#fff" opacity="0.9"/><path d="M34.60,-6.47 L30.93,-7.40 L31.51,-4.27 Z" fill="#fff" opacity="0.9"/><path d="M35.20,0.00 L31.76,-1.59 L31.76,1.59 Z" fill="#fff" opacity="0.9"/><path d="M34.60,6.47 L31.51,4.27 L30.93,7.40 Z" fill="#fff" opacity="0.9"/><path d="M32.82,12.72 L30.19,9.99 L29.04,12.96 Z" fill="#fff" opacity="0.9"/><path d="M29.93,18.53 L27.84,15.37 L26.17,18.07 Z" fill="#fff" opacity="0.9"/><path d="M26.01,23.71 L24.54,20.22 L22.40,22.57 Z" fill="#fff" opacity="0.9"/><path d="M21.21,28.09 L20.41,24.39 L17.87,26.30 Z" fill="#fff" opacity="0.9"/><path d="M15.69,31.51 L15.58,27.72 L12.73,29.14 Z" fill="#fff" opacity="0.9"/><path d="M9.63,33.86 L10.22,30.11 L7.16,30.98 Z" fill="#fff" opacity="0.9"/><path d="M3.25,35.05 L4.51,31.48 L1.35,31.77 Z" fill="#fff" opacity="0.9"/><path d="M-3.25,35.05 L-1.35,31.77 L-4.51,31.48 Z" fill="#fff" opacity="0.9"/><path d="M-9.63,33.86 L-7.16,30.98 L-10.22,30.11 Z" fill="#fff" opacity="0.9"/><path d="M-15.69,31.51 L-12.73,29.14 L-15.58,27.72 Z" fill="#fff" opacity="0.9"/><path d="M-21.21,28.09 L-17.87,26.30 L-20.41,24.39 Z" fill="#fff" opacity="0.9"/><path d="M-26.01,23.71 L-22.40,22.57 L-24.54,20.22 Z" fill="#fff" opacity="0.9"/><path d="M-29.93,18.53 L-26.17,18.07 L-27.84,15.37 Z" fill="#fff" opacity="0.9"/><path d="M-32.82,12.72 L-29.04,12.96 L-30.19,9.99 Z" fill="#fff" opacity="0.9"/><path d="M-34.60,6.47 L-30.93,7.40 L-31.51,4.27 Z" fill="#fff" opacity="0.9"/><path d="M-35.20,0.00 L-31.76,1.59 L-31.76,-1.59 Z" fill="#fff" opacity="0.9"/><path d="M-34.60,-6.47 L-31.51,-4.27 L-30.93,-7.40 Z" fill="#fff" opacity="0.9"/><path d="M-32.82,-12.72 L-30.19,-9.99 L-29.04,-12.96 Z" fill="#fff" opacity="0.9"/><path d="M-29.93,-18.53 L-27.84,-15.37 L-26.17,-18.07 Z" fill="#fff" opacity="0.9"/><path d="M-26.01,-23.71 L-24.54,-20.22 L-22.40,-22.57 Z" fill="#fff" opacity="0.9"/><path d="M-21.21,-28.09 L-20.41,-24.39 L-17.87,-26.30 Z" fill="#fff" opacity="0.9"/><path d="M-15.69,-31.51 L-15.58,-27.72 L-12.73,-29.14 Z" fill="#fff" opacity="0.9"/><path d="M-9.63,-33.86 L-10.22,-30.11 L-7.16,-30.98 Z" fill="#fff" opacity="0.9"/><path d="M-3.25,-35.05 L-4.51,-31.48 L-1.35,-31.77 Z" fill="#fff" opacity="0.9"/><circle r="29.6" fill="none" stroke="#fff" stroke-width="1.3"/><circle r="27.5" fill="none" stroke="#fff" stroke-width="0.7" opacity="0.6"/><path d="M0.00,-3.00 Q12.00,-15.50 0.00,-28.00 Q-12.00,-15.50 0.00,-3.00 Z" fill="none" stroke="#fff" stroke-width="1.4"/><path d="M0.00,-8.00 Q5.00,-15.00 0.00,-22.00 Q-5.00,-15.00 0.00,-8.00 Z" fill="none" stroke="#fff" stroke-width="1.1"/><path d="M5.29,-7.28 Q16.46,-9.05 14.69,-20.23 Q3.52,-18.46 5.29,-7.28 Z" fill="none" stroke="#fff" stroke-width="1.2"/><path d="M7.05,-9.71 Q12.42,-11.99 12.93,-17.80 Q7.57,-15.52 7.05,-9.71 Z" fill="#fff" opacity="0.8"/><path d="M2.85,-0.93 Q18.45,6.62 26.63,-8.65 Q11.03,-16.20 2.85,-0.93 Z" fill="none" stroke="#fff" stroke-width="1.4"/><path d="M7.61,-2.47 Q15.81,0.12 20.92,-6.80 Q12.72,-9.39 7.61,-2.47 Z" fill="none" stroke="#fff" stroke-width="1.1"/><path d="M8.56,2.78 Q13.70,12.86 23.78,7.73 Q18.64,-2.36 8.56,2.78 Z" fill="none" stroke="#fff" stroke-width="1.2"/><path d="M11.41,3.71 Q15.24,8.11 20.92,6.80 Q17.10,2.40 11.41,3.71 Z" fill="#fff" opacity="0.8"/><path d="M1.76,2.43 Q-0.60,19.59 16.46,22.65 Q18.82,5.49 1.76,2.43 Z" fill="none" stroke="#fff" stroke-width="1.4"/><path d="M4.70,6.47 Q4.77,15.07 12.93,17.80 Q12.86,9.20 4.70,6.47 Z" fill="none" stroke="#fff" stroke-width="1.1"/><path d="M0.00,9.00 Q-8.00,17.00 0.00,25.00 Q8.00,17.00 0.00,9.00 Z" fill="none" stroke="#fff" stroke-width="1.2"/><path d="M0.00,12.00 Q-3.00,17.00 0.00,22.00 Q3.00,17.00 0.00,12.00 Z" fill="#fff" opacity="0.8"/><path d="M-1.76,2.43 Q-18.82,5.49 -16.46,22.65 Q0.60,19.59 -1.76,2.43 Z" fill="none" stroke="#fff" stroke-width="1.4"/><path d="M-4.70,6.47 Q-12.86,9.20 -12.93,17.80 Q-4.77,15.07 -4.70,6.47 Z" fill="none" stroke="#fff" stroke-width="1.1"/><path d="M-8.56,2.78 Q-18.64,-2.36 -23.78,7.73 Q-13.70,12.86 -8.56,2.78 Z" fill="none" stroke="#fff" stroke-width="1.2"/><path d="M-11.41,3.71 Q-17.10,2.40 -20.92,6.80 Q-15.24,8.11 -11.41,3.71 Z" fill="#fff" opacity="0.8"/><path d="M-2.85,-0.93 Q-11.03,-16.20 -26.63,-8.65 Q-18.45,6.62 -2.85,-0.93 Z" fill="none" stroke="#fff" stroke-width="1.4"/><path d="M-7.61,-2.47 Q-12.72,-9.39 -20.92,-6.80 Q-15.81,0.12 -7.61,-2.47 Z" fill="none" stroke="#fff" stroke-width="1.1"/><path d="M-5.29,-7.28 Q-3.52,-18.46 -14.69,-20.23 Q-16.46,-9.05 -5.29,-7.28 Z" fill="none" stroke="#fff" stroke-width="1.2"/><path d="M-7.05,-9.71 Q-7.57,-15.52 -12.93,-17.80 Q-12.42,-11.99 -7.05,-9.71 Z" fill="#fff" opacity="0.8"/><path d="M0.00,-15.00 L2.65,-3.64 L14.27,-4.64 L4.28,1.39 L8.82,12.14 L0.00,4.50 L-8.82,12.14 L-4.28,1.39 L-14.27,-4.64 L-2.65,-3.64 Z" fill="#fff"/></svg>
<div class="t" style="left:177.00px;top:557.17px;font-family:'Liberation Serif',serif;font-weight:normal;font-size:19.5px;letter-spacing:0.000px;color:#151515;-webkit-text-stroke:0.55px #151515;">Sample text</div>
<div class="t" style="left:183.50px;top:580.97px;font-family:'Liberation Serif',serif;font-weight:normal;font-size:19.5px;letter-spacing:0.000px;color:#151515;-webkit-text-stroke:0.55px #151515;">Element 1</div>
<div class="card" style="left:127.00px;top:655px"></div>
<svg class="a" style="left:177.1px;top:663.1px" width="92" height="92" viewBox="0 0 91.6 92"><rect width="91.6" height="92" fill="#cdcdcd"/><g fill="#555"><path d="M2.4,7.1 L7.4,1.6 L22.9,17.9 L18.4,18.4 L18.9,23.4 Z"/><path d="M2.4,7.1 L7.4,1.6 L22.9,17.9 L18.4,18.4 L18.9,23.4 Z" transform="translate(91.6,0) scale(-1,1)"/><path d="M2.4,7.1 L7.4,1.6 L22.9,17.9 L18.4,18.4 L18.9,23.4 Z" transform="translate(0,92) scale(1,-1)"/><path d="M2.4,7.1 L7.4,1.6 L22.9,17.9 L18.4,18.4 L18.9,23.4 Z" transform="translate(91.6,92) scale(-1,-1)"/><circle cx="53.8" cy="39.2" r="3.3"/><path d="M27,58.5 L38.2,43.3 L47.3,54.5 L54.5,48.4 L65.2,59.6 L65.2,62.4 L27,62.4 Z"/></g><rect x="25.1" y="30" width="41.9" height="32.4" fill="none" stroke="#555" stroke-width="4"/></svg>
<div class="t" style="left:177.00px;top:771.17px;font-family:'Liberation Serif',serif;font-weight:normal;font-size:19.5px;letter-spacing:0.000px;color:#151515;-webkit-text-stroke:0.55px #151515;">Sample text</div>
<div class="t" style="left:183.50px;top:795.37px;font-family:'Liberation Serif',serif;font-weight:normal;font-size:19.5px;letter-spacing:0.000px;color:#151515;-webkit-text-stroke:0.55px #151515;">Element 7</div>
<div class="card" style="left:341.15px;top:440px"></div>
<svg class="a" style="left:389.45px;top:446.5px" width="96" height="96" viewBox="-48 -48 96 96"><circle r="46" fill="#dc0b6c"/><circle cx="35.11" cy="14.54" r="3.6" fill="none" stroke="#fff" stroke-width="1.4"/><circle cx="30.16" cy="7.15" r="3.2" fill="none" stroke="#fff" stroke-width="1.4"/><circle cx="26.38" cy="16.27" r="3.2" fill="none" stroke="#fff" stroke-width="1.4"/><circle cx="40.24" cy="7.85" r="2.2" fill="none" stroke="#fff" stroke-width="1.4"/><circle cx="34.01" cy="22.90" r="2.2" fill="none" stroke="#fff" stroke-width="1.4"/><circle cx="22.17" cy="9.18" r="2.6" fill="none" stroke="#fff" stroke-width="1.4"/><path d="M21.21,21.21 Q24.40,27.93 31.11,31.11 Q27.93,24.40 21.21,21.21 Z" fill="none" stroke="#fff" stroke-width="1.2"/><circle cx="14.54" cy="35.11" r="3.6" fill="none" stroke="#fff" stroke-width="1.4"/><circle cx="16.27" cy="26.38" r="3.2" fill="none" stroke="#fff" stroke-width="1.4"/><circle cx="7.15" cy="30.16" r="3.2" fill="none" stroke="#fff" stroke-width="1.4"/><circle cx="22.90" cy="34.01" r="2.2" fill="none" stroke="#fff" stroke-width="1.4"/><circle cx="7.85" cy="40.24" r="2.2" fill="none" stroke="#fff" stroke-width="1.4"/><circle cx="9.18" cy="22.17" r="2.6" fill="none" stroke="#fff" stroke-width="1.4"/><path d="M0.00,30.00 Q-2.50,37.00 0.00,44.00 Q2.50,37.00 0.00,30.00 Z" fill="none" stroke="#fff" stroke-width="1.2"/><circle cx="-14.54" cy="35.11" r="3.6" fill="none" stroke="#fff" stroke-width="1.4"/><circle cx="-7.15" cy="30.16" r="3.2" fill="none" stroke="#fff" stroke-width="1.4"/><circle cx="-16.27" cy="26.38" r="3.2" fill="none" stroke="#fff" stroke-width="1.4"/><circle cx="-7.85" cy="40.24" r="2.2" fill="none" stroke="#fff" stroke-width="1.4"/><circle cx="-22.90" cy="34.01" r="2.2" fill="none" stroke="#fff" stroke-width="1.4"/><circle cx="-9.18" cy="22.17" r="2.6" fill="none" stroke="#fff" stroke-width="1.4"/><path d="M-21.21,21.21 Q-27.93,24.40 -31.11,31.11 Q-24.40,27.93 -21.21,21.21 Z" fill="none" stroke="#fff" stroke-width="1.2"/><circle cx="-35.11" cy="14.54" r="3.6" fill="none" stroke="#fff" stroke-width="1.4"/><circle cx="-26.38" cy="16.27" r="3.2" fill="none" stroke="#fff" stroke-width="1.4"/><circle cx="-30.16" cy="7.15" r="3.2" fill="none" stroke="#fff" stroke-width="1.4"/><circle cx="-34.01" cy="22.90" r="2.2" fill="none" stroke="#fff" stroke-width="1.4"/><circle cx="-40.24" cy="7.85" r="2.2" fill="none" stroke="#fff" stroke-width="1.4"/><circle cx="-22.17" cy="9.18" r="2.6" fill="none" stroke="#fff" stroke-width="1.4"/><path d="M-30.00,0.00 Q-37.00,-2.50 -44.00,0.00 Q-37.00,2.50 -30.00,0.00 Z" fill="none" stroke="#fff" stroke-width="1.2"/><circle cx="-35.11" cy="-14.54" r="3.6" fill="none" stroke="#fff" stroke-width="1.4"/><circle cx="-30.16" cy="-7.15" r="3.2" fill="none" stroke="#fff" stroke-width="1.4"/><circle cx="-26.38" cy="-16.27" r="3.2" fill="none" stroke="#fff" stroke-width="1.4"/><circle cx="-40.24" cy="-7.85" r="2.2" fill="none" stroke="#fff" stroke-width="1.4"/><circle cx="-34.01" cy="-22.90" r="2.2" fill="none" stroke="#fff" stroke-width="1.4"/><circle cx="-22.17" cy="-9.18" r="2.6" fill="none" stroke="#fff" stroke-width="1.4"/><path d="M-21.21,-21.21 Q-24.40,-27.93 -31.11,-31.11 Q-27.93,-24.40 -21.21,-21.21 Z" fill="none" stroke="#fff" stroke-width="1.2"/><circle cx="-14.54" cy="-35.11" r="3.6" fill="none" stroke="#fff" stroke-width="1.4"/><circle cx="-16.27" cy="-26.38" r="3.2" fill="none" stroke="#fff" stroke-width="1.4"/><circle cx="-7.15" cy="-30.16" r="3.2" fill="none" stroke="#fff" stroke-width="1.4"/><circle cx="-22.90" cy="-34.01" r="2.2" fill="none" stroke="#fff" stroke-width="1.4"/><circle cx="-7.85" cy="-40.24" r="2.2" fill="none" stroke="#fff" stroke-width="1.4"/><circle cx="-9.18" cy="-22.17" r="2.6" fill="none" stroke="#fff" stroke-width="1.4"/><path d="M-0.00,-30.00 Q2.50,-37.00 -0.00,-44.00 Q-2.50,-37.00 -0.00,-30.00 Z" fill="none" stroke="#fff" stroke-width="1.2"/><circle cx="14.54" cy="-35.11" r="3.6" fill="none" stroke="#fff" stroke-width="1.4"/><circle cx="7.15" cy="-30.16" r="3.2" fill="none" stroke="#fff" stroke-width="1.4"/><circle cx="16.27" cy="-26.38" r="3.2" fill="none" stroke="#fff" stroke-width="1.4"/><circle cx="7.85" cy="-40.24" r="2.2" fill="none" stroke="#fff" stroke-width="1.4"/><circle cx="22.90" cy="-34.01" r="2.2" fill="none" stroke="#fff" stroke-width="1.4"/><circle cx="9.18" cy="-22.17" r="2.6" fill="none" stroke="#fff" stroke-width="1.4"/><path d="M21.21,-21.21 Q27.93,-24.40 31.11,-31.11 Q24.40,-27.93 21.21,-21.21 Z" fill="none" stroke="#fff" stroke-width="1.2"/><circle cx="35.11" cy="-14.54" r="3.6" fill="none" stroke="#fff" stroke-width="1.4"/><circle cx="26.38" cy="-16.27" r="3.2" fill="none" stroke="#fff" stroke-width="1.4"/><circle cx="30.16" cy="-7.15" r="3.2" fill="none" stroke="#fff" stroke-width="1.4"/><circle cx="34.01" cy="-22.90" r="2.2" fill="none" stroke="#fff" stroke-width="1.4"/><circle cx="40.24" cy="-7.85" r="2.2" fill="none" stroke="#fff" stroke-width="1.4"/><circle cx="22.17" cy="-9.18" r="2.6" fill="none" stroke="#fff" stroke-width="1.4"/><path d="M30.00,-0.00 Q37.00,2.50 44.00,-0.00 Q37.00,-2.50 30.00,-0.00 Z" fill="none" stroke="#fff" stroke-width="1.2"/><path d="M-20,-25 Q-9,-15 0,-8 Q9,-15 20,-25 L25,-20 Q15,-9 8,0 Q15,9 25,20 L20,25 Q9,15 0,8 Q-9,15 -20,25 L-25,20 Q-15,9 -8,0 Q-15,-9 -25,-20 Z" fill="#dc0b6c" stroke="#fff" stroke-width="1.6"/><path d="M-20,-25 Q-30,-6 -20,25 Q0,33 20,25 Q30,6 20,-25 Q0,-33 -20,-25 Z" fill="none" stroke="#fff" stroke-width="1.2"/><path d="M-20,-25 Q-9,-15 0,-8 Q9,-15 20,-25 L25,-20 Q15,-9 8,0 Q15,9 25,20 L20,25 Q9,15 0,8 Q-9,15 -20,25 L-25,20 Q-15,9 -8,0 Q-15,-9 -25,-20 Z" fill="#dc0b6c"/></svg>
<div class="t" style="left:391.15px;top:557.17px;font-family:'Liberation Serif',serif;font-weight:normal;font-size:19.5px;letter-spacing:0.000px;color:#151515;-webkit-text-stroke:0.55px #151515;">Sample text</div>
<div class="t" style="left:397.65px;top:580.97px;font-family:'Liberation Serif',serif;font-weight:normal;font-size:19.5px;letter-spacing:0.000px;color:#151515;-webkit-text-stroke:0.55px #151515;">Element 2</div>
<div class="card" style="left:341.15px;top:655px"></div>
<svg class="a" style="left:391.2px;top:663.1px" width="92" height="92" viewBox="0 0 91.6 92"><rect width="91.6" height="92" fill="#cdcdcd"/><g fill="#555"><path d="M2.4,7.1 L7.4,1.6 L22.9,17.9 L18.4,18.4 L18.9,23.4 Z"/><path d="M2.4,7.1 L7.4,1.6 L22.9,17.9 L18.4,18.4 L18.9,23.4 Z" transform="translate(91.6,0) scale(-1,1)"/><path d="M2.4,7.1 L7.4,1.6 L22.9,17.9 L18.4,18.4 L18.9,23.4 Z" transform="translate(0,92) scale(1,-1)"/><path d="M2.4,7.1 L7.4,1.6 L22.9,17.9 L18.4,18.4 L18.9,23.4 Z" transform="translate(91.6,92) scale(-1,-1)"/><circle cx="53.8" cy="39.2" r="3.3"/><path d="M27,58.5 L38.2,43.3 L47.3,54.5 L54.5,48.4 L65.2,59.6 L65.2,62.4 L27,62.4 Z"/></g><rect x="25.1" y="30" width="41.9" height="32.4" fill="none" stroke="#555" stroke-width="4"/></svg>
<div class="t" style="left:391.15px;top:771.17px;font-family:'Liberation Serif',serif;font-weight:normal;font-size:19.5px;letter-spacing:0.000px;color:#151515;-webkit-text-stroke:0.55px #151515;">Sample text</div>
<div class="t" style="left:397.65px;top:795.37px;font-family:'Liberation Serif',serif;font-weight:normal;font-size:19.5px;letter-spacing:0.000px;color:#151515;-webkit-text-stroke:0.55px #151515;">Element 8</div>
<div class="card" style="left:555.30px;top:440px"></div>
<svg class="a" style="left:603.60px;top:446.5px" width="96" height="96" viewBox="-48 -48 96 96"><circle r="46" fill="#0f622b"/><circle cx="36.78" cy="7.32" r="5.2" fill="none" stroke="#fff" stroke-width="2.3" stroke-dasharray="22 11" transform="rotate(101.2 36.78 7.32)"/><circle cx="40.65" cy="16.84" r="2.2" fill="#fff"/><circle cx="31.18" cy="20.83" r="5.2" fill="none" stroke="#fff" stroke-width="2.3" stroke-dasharray="22 11" transform="rotate(123.8 31.18 20.83)"/><circle cx="31.11" cy="31.11" r="2.2" fill="#fff"/><circle cx="20.83" cy="31.18" r="5.2" fill="none" stroke="#fff" stroke-width="2.3" stroke-dasharray="22 11" transform="rotate(146.2 20.83 31.18)"/><circle cx="16.84" cy="40.65" r="2.2" fill="#fff"/><circle cx="7.32" cy="36.78" r="5.2" fill="none" stroke="#fff" stroke-width="2.3" stroke-dasharray="22 11" transform="rotate(168.8 7.32 36.78)"/><circle cx="0.00" cy="44.00" r="2.2" fill="#fff"/><circle cx="-7.32" cy="36.78" r="5.2" fill="none" stroke="#fff" stroke-width="2.3" stroke-dasharray="22 11" transform="rotate(191.2 -7.32 36.78)"/><circle cx="-16.84" cy="40.65" r="2.2" fill="#fff"/><circle cx="-20.83" cy="31.18" r="5.2" fill="none" stroke="#fff" stroke-width="2.3" stroke-dasharray="22 11" transform="rotate(213.8 -20.83 31.18)"/><circle cx="-31.11" cy="31.11" r="2.2" fill="#fff"/><circle cx="-31.18" cy="20.83" r="5.2" fill="none" stroke="#fff" stroke-width="2.3" stroke-dasharray="22 11" transform="rotate(236.2 -31.18 20.83)"/><circle cx="-40.65" cy="16.84" r="2.2" fill="#fff"/><circle cx="-36.78" cy="7.32" r="5.2" fill="none" stroke="#fff" stroke-width="2.3" stroke-dasharray="22 11" transform="rotate(258.8 -36.78 7.32)"/><circle cx="-44.00" cy="0.00" r="2.2" fill="#fff"/><circle cx="-36.78" cy="-7.32" r="5.2" fill="none" stroke="#fff" stroke-width="2.3" stroke-dasharray="22 11" transform="rotate(281.2 -36.78 -7.32)"/><circle cx="-40.65" cy="-16.84" r="2.2" fill="#fff"/><circle cx="-31.18" cy="-20.83" r="5.2" fill="none" stroke="#fff" stroke-width="2.3" stroke-dasharray="22 11" transform="rotate(303.8 -31.18 -20.83)"/><circle cx="-31.11" cy="-31.11" r="2.2" fill="#fff"/><circle cx="-20.83" cy="-31.18" r="5.2" fill="none" stroke="#fff" stroke-width="2.3" stroke-dasharray="22 11" transform="rotate(326.2 -20.83 -31.18)"/><circle cx="-16.84" cy="-40.65" r="2.2" fill="#fff"/><circle cx="-7.32" cy="-36.78" r="5.2" fill="none" stroke="#fff" stroke-width="2.3" stroke-dasharray="22 11" transform="rotate(348.8 -7.32 -36.78)"/><circle cx="-0.00" cy="-44.00" r="2.2" fill="#fff"/><circle cx="7.32" cy="-36.78" r="5.2" fill="none" stroke="#fff" stroke-width="2.3" stroke-dasharray="22 11" transform="rotate(371.2 7.32 -36.78)"/><circle cx="16.84" cy="-40.65" r="2.2" fill="#fff"/><circle cx="20.83" cy="-31.18" r="5.2" fill="none" stroke="#fff" stroke-width="2.3" stroke-dasharray="22 11" transform="rotate(393.8 20.83 -31.18)"/><circle cx="31.11" cy="-31.11" r="2.2" fill="#fff"/><circle cx="31.18" cy="-20.83" r="5.2" fill="none" stroke="#fff" stroke-width="2.3" stroke-dasharray="22 11" transform="rotate(416.2 31.18 -20.83)"/><circle cx="40.65" cy="-16.84" r="2.2" fill="#fff"/><circle cx="36.78" cy="-7.32" r="5.2" fill="none" stroke="#fff" stroke-width="2.3" stroke-dasharray="22 11" transform="rotate(438.8 36.78 -7.32)"/><circle cx="44.00" cy="-0.00" r="2.2" fill="#fff"/><circle r="46" fill="none" stroke="#fff" stroke-width="1.2" opacity="0.7"/><path d="M5.66,5.66 Q3.89,25.10 23.33,23.33 Q25.10,3.89 5.66,5.66 Z" fill="#0f622b" stroke="#fff" stroke-width="2.2"/><path d="M8.49,8.49 Q8.84,18.74 19.09,19.09 Q18.74,8.84 8.49,8.49 Z" fill="none" stroke="#fff" stroke-width="1.6"/><path d="M-5.66,5.66 Q-25.10,3.89 -23.33,23.33 Q-3.89,25.10 -5.66,5.66 Z" fill="#0f622b" stroke="#fff" stroke-width="2.2"/><path d="M-8.49,8.49 Q-18.74,8.84 -19.09,19.09 Q-8.84,18.74 -8.49,8.49 Z" fill="none" stroke="#fff" stroke-width="1.6"/><path d="M-5.66,-5.66 Q-3.89,-25.10 -23.33,-23.33 Q-25.10,-3.89 -5.66,-5.66 Z" fill="#0f622b" stroke="#fff" stroke-width="2.2"/><path d="M-8.49,-8.49 Q-8.84,-18.74 -19.09,-19.09 Q-18.74,-8.84 -8.49,-8.49 Z" fill="none" stroke="#fff" stroke-width="1.6"/><path d="M5.66,-5.66 Q25.10,-3.89 23.33,-23.33 Q3.89,-25.10 5.66,-5.66 Z" fill="#0f622b" stroke="#fff" stroke-width="2.2"/><path d="M8.49,-8.49 Q18.74,-8.84 19.09,-19.09 Q8.84,-18.74 8.49,-8.49 Z" fill="none" stroke="#fff" stroke-width="1.6"/><path d="M7.00,0.00 Q21.50,13.00 36.00,0.00 Q21.50,-13.00 7.00,0.00 Z" fill="#0f622b" stroke="#fff" stroke-width="2.2"/><path d="M11.00,0.00 Q20.50,6.00 30.00,0.00 Q20.50,-6.00 11.00,0.00 Z" fill="none" stroke="#fff" stroke-width="1.6"/><path d="M0.00,7.00 Q-13.00,21.50 0.00,36.00 Q13.00,21.50 0.00,7.00 Z" fill="#0f622b" stroke="#fff" stroke-width="2.2"/><path d="M0.00,11.00 Q-6.00,20.50 0.00,30.00 Q6.00,20.50 0.00,11.00 Z" fill="none" stroke="#fff" stroke-width="1.6"/><path d="M-7.00,0.00 Q-21.50,-13.00 -36.00,0.00 Q-21.50,13.00 -7.00,0.00 Z" fill="#0f622b" stroke="#fff" stroke-width="2.2"/><path d="M-11.00,0.00 Q-20.50,-6.00 -30.00,0.00 Q-20.50,6.00 -11.00,0.00 Z" fill="none" stroke="#fff" stroke-width="1.6"/><path d="M-0.00,-7.00 Q13.00,-21.50 -0.00,-36.00 Q-13.00,-21.50 -0.00,-7.00 Z" fill="#0f622b" stroke="#fff" stroke-width="2.2"/><path d="M-0.00,-11.00 Q6.00,-20.50 -0.00,-30.00 Q-6.00,-20.50 -0.00,-11.00 Z" fill="none" stroke="#fff" stroke-width="1.6"/><circle r="8" fill="#fff"/><circle r="6" fill="#0f622b"/></svg>
<div class="t" style="left:605.30px;top:557.17px;font-family:'Liberation Serif',serif;font-weight:normal;font-size:19.5px;letter-spacing:0.000px;color:#151515;-webkit-text-stroke:0.55px #151515;">Sample text</div>
<div class="t" style="left:611.80px;top:580.97px;font-family:'Liberation Serif',serif;font-weight:normal;font-size:19.5px;letter-spacing:0.000px;color:#151515;-webkit-text-stroke:0.55px #151515;">Element 3</div>
<div class="card" style="left:555.30px;top:655px"></div>
<svg class="a" style="left:605.4px;top:663.1px" width="92" height="92" viewBox="0 0 91.6 92"><rect width="91.6" height="92" fill="#cdcdcd"/><g fill="#555"><path d="M2.4,7.1 L7.4,1.6 L22.9,17.9 L18.4,18.4 L18.9,23.4 Z"/><path d="M2.4,7.1 L7.4,1.6 L22.9,17.9 L18.4,18.4 L18.9,23.4 Z" transform="translate(91.6,0) scale(-1,1)"/><path d="M2.4,7.1 L7.4,1.6 L22.9,17.9 L18.4,18.4 L18.9,23.4 Z" transform="translate(0,92) scale(1,-1)"/><path d="M2.4,7.1 L7.4,1.6 L22.9,17.9 L18.4,18.4 L18.9,23.4 Z" transform="translate(91.6,92) scale(-1,-1)"/><circle cx="53.8" cy="39.2" r="3.3"/><path d="M27,58.5 L38.2,43.3 L47.3,54.5 L54.5,48.4 L65.2,59.6 L65.2,62.4 L27,62.4 Z"/></g><rect x="25.1" y="30" width="41.9" height="32.4" fill="none" stroke="#555" stroke-width="4"/></svg>
<div class="t" style="left:605.30px;top:771.17px;font-family:'Liberation Serif',serif;font-weight:normal;font-size:19.5px;letter-spacing:0.000px;color:#151515;-webkit-text-stroke:0.55px #151515;">Sample text</div>
<div class="t" style="left:611.80px;top:795.37px;font-family:'Liberation Serif',serif;font-weight:normal;font-size:19.5px;letter-spacing:0.000px;color:#151515;-webkit-text-stroke:0.55px #151515;">Element 9</div>
<div class="card" style="left:769.45px;top:440px"></div>
<svg class="a" style="left:817.75px;top:446.5px" width="96" height="96" viewBox="-48 -48 96 96"><circle r="46" fill="#3b3294"/><path d="M0.00,-42.60 L3.49,-37.64 L7.83,-41.87 L10.34,-36.36 L15.39,-39.72 L16.85,-33.84 L22.43,-36.22 L22.78,-30.17 L28.70,-31.48 L27.93,-25.47 L34.00,-25.67 L32.14,-19.90 L38.13,-18.99 L35.25,-13.65 L40.97,-11.66 L37.16,-6.95 L42.42,-3.93 L37.80,0.00 L42.42,3.93 L37.16,6.95 L40.97,11.66 L35.25,13.65 L38.13,18.99 L32.14,19.90 L34.00,25.67 L27.93,25.47 L28.70,31.48 L22.78,30.17 L22.43,36.22 L16.85,33.84 L15.39,39.72 L10.34,36.36 L7.83,41.87 L3.49,37.64 L0.00,42.60 L-3.49,37.64 L-7.83,41.87 L-10.34,36.36 L-15.39,39.72 L-16.85,33.84 L-22.43,36.22 L-22.78,30.17 L-28.70,31.48 L-27.93,25.47 L-34.00,25.67 L-32.14,19.90 L-38.13,18.99 L-35.25,13.65 L-40.97,11.66 L-37.16,6.95 L-42.42,3.93 L-37.80,0.00 L-42.42,-3.93 L-37.16,-6.95 L-40.97,-11.66 L-35.25,-13.65 L-38.13,-18.99 L-32.14,-19.90 L-34.00,-25.67 L-27.93,-25.47 L-28.70,-31.48 L-22.78,-30.17 L-22.43,-36.22 L-16.85,-33.84 L-15.39,-39.72 L-10.34,-36.36 L-7.83,-41.87 L-3.49,-37.64 Z" fill="none" stroke="#fff" stroke-width="1.25" opacity="0.95"/><path d="M3.25,-35.05 L1.35,-31.77 L4.51,-31.48 Z" fill="#fff" opacity="0.9"/><path d="M9.63,-33.86 L7.16,-30.98 L10.22,-30.11 Z" fill="#fff" opacity="0.9"/><path d="M15.69,-31.51 L12.73,-29.14 L15.58,-27.72 Z" fill="#fff" opacity="0.9"/><path d="M21.21,-28.09 L17.87,-26.30 L20.41,-24.39 Z" fill="#fff" opacity="0.9"/><path d="M26.01,-23.71 L22.40,-22.57 L24.54,-20.22 Z" fill="#fff" opacity="0.9"/><path d="M29.93,-18.53 L26.17,-18.07 L27.84,-15.37 Z" fill="#fff" opacity="0.9"/><path d="M32.82,-12.72 L29.04,-12.96 L30.19,-9.99 Z" fill="#fff" opacity="0.9"/><path d="M34.60,-6.47 L30.93,-7.40 L31.51,-4.27 Z" fill="#fff" opacity="0.9"/><path d="M35.20,0.00 L31.76,-1.59 L31.76,1.59 Z" fill="#fff" opacity="0.9"/><path d="M34.60,6.47 L31.51,4.27 L30.93,7.40 Z" fill="#fff" opacity="0.9"/><path d="M32.82,12.72 L30.19,9.99 L29.04,12.96 Z" fill="#fff" opacity="0.9"/><path d="M29.93,18.53 L27.84,15.37 L26.17,18.07 Z" fill="#fff" opacity="0.9"/><path d="M26.01,23.71 L24.54,20.22 L22.40,22.57 Z" fill="#fff" opacity="0.9"/><path d="M21.21,28.09 L20.41,24.39 L17.87,26.30 Z" fill="#fff" opacity="0.9"/><path d="M15.69,31.51 L15.58,27.72 L12.73,29.14 Z" fill="#fff" opacity="0.9"/><path d="M9.63,33.86 L10.22,30.11 L7.16,30.98 Z" fill="#fff" opacity="0.9"/><path d="M3.25,35.05 L4.51,31.48 L1.35,31.77 Z" fill="#fff" opacity="0.9"/><path d="M-3.25,35.05 L-1.35,31.77 L-4.51,31.48 Z" fill="#fff" opacity="0.9"/><path d="M-9.63,33.86 L-7.16,30.98 L-10.22,30.11 Z" fill="#fff" opacity="0.9"/><path d="M-15.69,31.51 L-12.73,29.14 L-15.58,27.72 Z" fill="#fff" opacity="0.9"/><path d="M-21.21,28.09 L-17.87,26.30 L-20.41,24.39 Z" fill="#fff" opacity="0.9"/><path d="M-26.01,23.71 L-22.40,22.57 L-24.54,20.22 Z" fill="#fff" opacity="0.9"/><path d="M-29.93,18.53 L-26.17,18.07 L-27.84,15.37 Z" fill="#fff" opacity="0.9"/><path d="M-32.82,12.72 L-29.04,12.96 L-30.19,9.99 Z" fill="#fff" opacity="0.9"/><path d="M-34.60,6.47 L-30.93,7.40 L-31.51,4.27 Z" fill="#fff" opacity="0.9"/><path d="M-35.20,0.00 L-31.76,1.59 L-31.76,-1.59 Z" fill="#fff" opacity="0.9"/><path d="M-34.60,-6.47 L-31.51,-4.27 L-30.93,-7.40 Z" fill="#fff" opacity="0.9"/><path d="M-32.82,-12.72 L-30.19,-9.99 L-29.04,-12.96 Z" fill="#fff" opacity="0.9"/><path d="M-29.93,-18.53 L-27.84,-15.37 L-26.17,-18.07 Z" fill="#fff" opacity="0.9"/><path d="M-26.01,-23.71 L-24.54,-20.22 L-22.40,-22.57 Z" fill="#fff" opacity="0.9"/><path d="M-21.21,-28.09 L-20.41,-24.39 L-17.87,-26.30 Z" fill="#fff" opacity="0.9"/><path d="M-15.69,-31.51 L-15.58,-27.72 L-12.73,-29.14 Z" fill="#fff" opacity="0.9"/><path d="M-9.63,-33.86 L-10.22,-30.11 L-7.16,-30.98 Z" fill="#fff" opacity="0.9"/><path d="M-3.25,-35.05 L-4.51,-31.48 L-1.35,-31.77 Z" fill="#fff" opacity="0.9"/><circle r="29.6" fill="none" stroke="#fff" stroke-width="1.3"/><circle r="27.5" fill="none" stroke="#fff" stroke-width="0.7" opacity="0.6"/><path d="M0.00,-3.00 Q12.00,-15.50 0.00,-28.00 Q-12.00,-15.50 0.00,-3.00 Z" fill="none" stroke="#fff" stroke-width="1.4"/><path d="M0.00,-8.00 Q5.00,-15.00 0.00,-22.00 Q-5.00,-15.00 0.00,-8.00 Z" fill="none" stroke="#fff" stroke-width="1.1"/><path d="M5.29,-7.28 Q16.46,-9.05 14.69,-20.23 Q3.52,-18.46 5.29,-7.28 Z" fill="none" stroke="#fff" stroke-width="1.2"/><path d="M7.05,-9.71 Q12.42,-11.99 12.93,-17.80 Q7.57,-15.52 7.05,-9.71 Z" fill="#fff" opacity="0.8"/><path d="M2.85,-0.93 Q18.45,6.62 26.63,-8.65 Q11.03,-16.20 2.85,-0.93 Z" fill="none" stroke="#fff" stroke-width="1.4"/><path d="M7.61,-2.47 Q15.81,0.12 20.92,-6.80 Q12.72,-9.39 7.61,-2.47 Z" fill="none" stroke="#fff" stroke-width="1.1"/><path d="M8.56,2.78 Q13.70,12.86 23.78,7.73 Q18.64,-2.36 8.56,2.78 Z" fill="none" stroke="#fff" stroke-width="1.2"/><path d="M11.41,3.71 Q15.24,8.11 20.92,6.80 Q17.10,2.40 11.41,3.71 Z" fill="#fff" opacity="0.8"/><path d="M1.76,2.43 Q-0.60,19.59 16.46,22.65 Q18.82,5.49 1.76,2.43 Z" fill="none" stroke="#fff" stroke-width="1.4"/><path d="M4.70,6.47 Q4.77,15.07 12.93,17.80 Q12.86,9.20 4.70,6.47 Z" fill="none" stroke="#fff" stroke-width="1.1"/><path d="M0.00,9.00 Q-8.00,17.00 0.00,25.00 Q8.00,17.00 0.00,9.00 Z" fill="none" stroke="#fff" stroke-width="1.2"/><path d="M0.00,12.00 Q-3.00,17.00 0.00,22.00 Q3.00,17.00 0.00,12.00 Z" fill="#fff" opacity="0.8"/><path d="M-1.76,2.43 Q-18.82,5.49 -16.46,22.65 Q0.60,19.59 -1.76,2.43 Z" fill="none" stroke="#fff" stroke-width="1.4"/><path d="M-4.70,6.47 Q-12.86,9.20 -12.93,17.80 Q-4.77,15.07 -4.70,6.47 Z" fill="none" stroke="#fff" stroke-width="1.1"/><path d="M-8.56,2.78 Q-18.64,-2.36 -23.78,7.73 Q-13.70,12.86 -8.56,2.78 Z" fill="none" stroke="#fff" stroke-width="1.2"/><path d="M-11.41,3.71 Q-17.10,2.40 -20.92,6.80 Q-15.24,8.11 -11.41,3.71 Z" fill="#fff" opacity="0.8"/><path d="M-2.85,-0.93 Q-11.03,-16.20 -26.63,-8.65 Q-18.45,6.62 -2.85,-0.93 Z" fill="none" stroke="#fff" stroke-width="1.4"/><path d="M-7.61,-2.47 Q-12.72,-9.39 -20.92,-6.80 Q-15.81,0.12 -7.61,-2.47 Z" fill="none" stroke="#fff" stroke-width="1.1"/><path d="M-5.29,-7.28 Q-3.52,-18.46 -14.69,-20.23 Q-16.46,-9.05 -5.29,-7.28 Z" fill="none" stroke="#fff" stroke-width="1.2"/><path d="M-7.05,-9.71 Q-7.57,-15.52 -12.93,-17.80 Q-12.42,-11.99 -7.05,-9.71 Z" fill="#fff" opacity="0.8"/><path d="M0.00,-15.00 L2.65,-3.64 L14.27,-4.64 L4.28,1.39 L8.82,12.14 L0.00,4.50 L-8.82,12.14 L-4.28,1.39 L-14.27,-4.64 L-2.65,-3.64 Z" fill="#fff"/></svg>
<div class="t" style="left:819.45px;top:557.17px;font-family:'Liberation Serif',serif;font-weight:normal;font-size:19.5px;letter-spacing:0.000px;color:#151515;-webkit-text-stroke:0.55px #151515;">Sample text</div>
<div class="t" style="left:825.95px;top:580.97px;font-family:'Liberation Serif',serif;font-weight:normal;font-size:19.5px;letter-spacing:0.000px;color:#151515;-webkit-text-stroke:0.55px #151515;">Element 4</div>
<div class="card" style="left:769.45px;top:655px"></div>
<svg class="a" style="left:819.6px;top:663.1px" width="92" height="92" viewBox="0 0 91.6 92"><rect width="91.6" height="92" fill="#cdcdcd"/><g fill="#555"><path d="M2.4,7.1 L7.4,1.6 L22.9,17.9 L18.4,18.4 L18.9,23.4 Z"/><path d="M2.4,7.1 L7.4,1.6 L22.9,17.9 L18.4,18.4 L18.9,23.4 Z" transform="translate(91.6,0) scale(-1,1)"/><path d="M2.4,7.1 L7.4,1.6 L22.9,17.9 L18.4,18.4 L18.9,23.4 Z" transform="translate(0,92) scale(1,-1)"/><path d="M2.4,7.1 L7.4,1.6 L22.9,17.9 L18.4,18.4 L18.9,23.4 Z" transform="translate(91.6,92) scale(-1,-1)"/><circle cx="53.8" cy="39.2" r="3.3"/><path d="M27,58.5 L38.2,43.3 L47.3,54.5 L54.5,48.4 L65.2,59.6 L65.2,62.4 L27,62.4 Z"/></g><rect x="25.1" y="30" width="41.9" height="32.4" fill="none" stroke="#555" stroke-width="4"/></svg>
<div class="t" style="left:819.45px;top:771.17px;font-family:'Liberation Serif',serif;font-weight:normal;font-size:19.5px;letter-spacing:0.000px;color:#151515;-webkit-text-stroke:0.55px #151515;">Sample text</div>
<div class="t" style="left:821.08px;top:795.37px;font-family:'Liberation Serif',serif;font-weight:normal;font-size:19.5px;letter-spacing:0.000px;color:#151515;-webkit-text-stroke:0.55px #151515;">Element 10</div>
<div class="card" style="left:983.60px;top:440px"></div>
<svg class="a" style="left:1031.90px;top:446.5px" width="96" height="96" viewBox="-48 -48 96 96"><path d="M7.83,-1.66 Q22.25,-8.99 32.50,5.73 Q15.28,7.45 7.83,-1.66 Z" fill="#e6e6e9" stroke="#159b89" stroke-width="0.7"/><path d="M7.61,2.47 Q23.77,3.34 25.28,21.21 Q9.51,14.09 7.61,2.47 Z" fill="#e6e6e9" stroke="#159b89" stroke-width="0.7"/><path d="M5.35,5.95 Q18.91,14.78 11.29,31.01 Q1.19,16.96 5.35,5.95 Z" fill="#e6e6e9" stroke="#159b89" stroke-width="0.7"/><path d="M1.66,7.83 Q8.99,22.25 -5.73,32.50 Q-7.45,15.28 1.66,7.83 Z" fill="#e6e6e9" stroke="#159b89" stroke-width="0.7"/><path d="M-2.47,7.61 Q-3.34,23.77 -21.21,25.28 Q-14.09,9.51 -2.47,7.61 Z" fill="#e6e6e9" stroke="#159b89" stroke-width="0.7"/><path d="M-5.95,5.35 Q-14.78,18.91 -31.01,11.29 Q-16.96,1.19 -5.95,5.35 Z" fill="#e6e6e9" stroke="#159b89" stroke-width="0.7"/><path d="M-7.83,1.66 Q-22.25,8.99 -32.50,-5.73 Q-15.28,-7.45 -7.83,1.66 Z" fill="#e6e6e9" stroke="#159b89" stroke-width="0.7"/><path d="M-7.61,-2.47 Q-23.77,-3.34 -25.28,-21.21 Q-9.51,-14.09 -7.61,-2.47 Z" fill="#e6e6e9" stroke="#159b89" stroke-width="0.7"/><path d="M-5.35,-5.95 Q-18.91,-14.78 -11.29,-31.01 Q-1.19,-16.96 -5.35,-5.95 Z" fill="#e6e6e9" stroke="#159b89" stroke-width="0.7"/><path d="M-1.66,-7.83 Q-8.99,-22.25 5.73,-32.50 Q7.45,-15.28 -1.66,-7.83 Z" fill="#e6e6e9" stroke="#159b89" stroke-width="0.7"/><path d="M2.47,-7.61 Q3.34,-23.77 21.21,-25.28 Q14.09,-9.51 2.47,-7.61 Z" fill="#e6e6e9" stroke="#159b89" stroke-width="0.7"/><path d="M5.95,-5.35 Q14.78,-18.91 31.01,-11.29 Q16.96,-1.19 5.95,-5.35 Z" fill="#e6e6e9" stroke="#159b89" stroke-width="0.7"/><path d="M20.12,11.15 Q26.73,13.62 32.51,9.94 Q39.13,8.32 41.49,-0.72" fill="none" stroke="#159b89" stroke-width="8" stroke-linecap="round"/><circle cx="37.17" cy="-7.90" r="4.8" fill="#159b89"/><circle cx="37.03" cy="-8.55" r="1.7" fill="#fff"/><path d="M11.85,19.71 Q16.34,25.16 23.19,24.87 Q29.73,26.77 36.30,20.12" fill="none" stroke="#159b89" stroke-width="8" stroke-linecap="round"/><circle cx="36.14" cy="11.74" r="4.8" fill="#159b89"/><circle cx="36.34" cy="11.11" r="1.7" fill="#fff"/><path d="M0.40,23.00 Q1.57,29.96 7.65,33.13 Q12.36,38.04 21.37,35.57" fill="none" stroke="#159b89" stroke-width="8" stroke-linecap="round"/><circle cx="25.43" cy="28.24" r="4.8" fill="#159b89"/><circle cx="25.92" cy="27.79" r="1.7" fill="#fff"/><path d="M-11.15,20.12 Q-13.62,26.73 -9.94,32.51 Q-8.32,39.13 0.72,41.49" fill="none" stroke="#159b89" stroke-width="8" stroke-linecap="round"/><circle cx="7.90" cy="37.17" r="4.8" fill="#159b89"/><circle cx="8.55" cy="37.03" r="1.7" fill="#fff"/><path d="M-19.71,11.85 Q-25.16,16.34 -24.87,23.19 Q-26.77,29.73 -20.12,36.30" fill="none" stroke="#159b89" stroke-width="8" stroke-linecap="round"/><circle cx="-11.74" cy="36.14" r="4.8" fill="#159b89"/><circle cx="-11.11" cy="36.34" r="1.7" fill="#fff"/><path d="M-23.00,0.40 Q-29.96,1.57 -33.13,7.65 Q-38.04,12.36 -35.57,21.37" fill="none" stroke="#159b89" stroke-width="8" stroke-linecap="round"/><circle cx="-28.24" cy="25.43" r="4.8" fill="#159b89"/><circle cx="-27.79" cy="25.92" r="1.7" fill="#fff"/><path d="M-20.12,-11.15 Q-26.73,-13.62 -32.51,-9.94 Q-39.13,-8.32 -41.49,0.72" fill="none" stroke="#159b89" stroke-width="8" stroke-linecap="round"/><circle cx="-37.17" cy="7.90" r="4.8" fill="#159b89"/><circle cx="-37.03" cy="8.55" r="1.7" fill="#fff"/><path d="M-11.85,-19.71 Q-16.34,-25.16 -23.19,-24.87 Q-29.73,-26.77 -36.30,-20.12" fill="none" stroke="#159b89" stroke-width="8" stroke-linecap="round"/><circle cx="-36.14" cy="-11.74" r="4.8" fill="#159b89"/><circle cx="-36.34" cy="-11.11" r="1.7" fill="#fff"/><path d="M-0.40,-23.00 Q-1.57,-29.96 -7.65,-33.13 Q-12.36,-38.04 -21.37,-35.57" fill="none" stroke="#159b89" stroke-width="8" stroke-linecap="round"/><circle cx="-25.43" cy="-28.24" r="4.8" fill="#159b89"/><circle cx="-25.92" cy="-27.79" r="1.7" fill="#fff"/><path d="M11.15,-20.12 Q13.62,-26.73 9.94,-32.51 Q8.32,-39.13 -0.72,-41.49" fill="none" stroke="#159b89" stroke-width="8" stroke-linecap="round"/><circle cx="-7.90" cy="-37.17" r="4.8" fill="#159b89"/><circle cx="-8.55" cy="-37.03" r="1.7" fill="#fff"/><path d="M19.71,-11.85 Q25.16,-16.34 24.87,-23.19 Q26.77,-29.73 20.12,-36.30" fill="none" stroke="#159b89" stroke-width="8" stroke-linecap="round"/><circle cx="11.74" cy="-36.14" r="4.8" fill="#159b89"/><circle cx="11.11" cy="-36.34" r="1.7" fill="#fff"/><path d="M23.00,-0.40 Q29.96,-1.57 33.13,-7.65 Q38.04,-12.36 35.57,-21.37" fill="none" stroke="#159b89" stroke-width="8" stroke-linecap="round"/><circle cx="28.24" cy="-25.43" r="4.8" fill="#159b89"/><circle cx="27.79" cy="-25.92" r="1.7" fill="#fff"/><circle r="9.5" fill="#fff"/><circle r="5.6" fill="#159b89"/></svg>
<div class="t" style="left:1033.60px;top:557.17px;font-family:'Liberation Serif',serif;font-weight:normal;font-size:19.5px;letter-spacing:0.000px;color:#151515;-webkit-text-stroke:0.55px #151515;">Sample text</div>
<div class="t" style="left:1040.10px;top:580.97px;font-family:'Liberation Serif',serif;font-weight:normal;font-size:19.5px;letter-spacing:0.000px;color:#151515;-webkit-text-stroke:0.55px #151515;">Element 5</div>
<div class="card" style="left:983.60px;top:655px"></div>
<svg class="a" style="left:1033.7px;top:663.1px" width="92" height="92" viewBox="0 0 91.6 92"><rect width="91.6" height="92" fill="#cdcdcd"/><g fill="#555"><path d="M2.4,7.1 L7.4,1.6 L22.9,17.9 L18.4,18.4 L18.9,23.4 Z"/><path d="M2.4,7.1 L7.4,1.6 L22.9,17.9 L18.4,18.4 L18.9,23.4 Z" transform="translate(91.6,0) scale(-1,1)"/><path d="M2.4,7.1 L7.4,1.6 L22.9,17.9 L18.4,18.4 L18.9,23.4 Z" transform="translate(0,92) scale(1,-1)"/><path d="M2.4,7.1 L7.4,1.6 L22.9,17.9 L18.4,18.4 L18.9,23.4 Z" transform="translate(91.6,92) scale(-1,-1)"/><circle cx="53.8" cy="39.2" r="3.3"/><path d="M27,58.5 L38.2,43.3 L47.3,54.5 L54.5,48.4 L65.2,59.6 L65.2,62.4 L27,62.4 Z"/></g><rect x="25.1" y="30" width="41.9" height="32.4" fill="none" stroke="#555" stroke-width="4"/></svg>
<div class="t" style="left:1033.60px;top:771.17px;font-family:'Liberation Serif',serif;font-weight:normal;font-size:19.5px;letter-spacing:0.000px;color:#151515;-webkit-text-stroke:0.55px #151515;">Sample text</div>
<div class="t" style="left:1035.58px;top:795.37px;font-family:'Liberation Serif',serif;font-weight:normal;font-size:19.5px;letter-spacing:0.000px;color:#151515;-webkit-text-stroke:0.55px #151515;">Element 11</div>
<div class="card" style="left:1197.75px;top:440px"></div>
<svg class="a" style="left:1246.05px;top:446.5px" width="96" height="96" viewBox="-48 -48 96 96"><ellipse cx="0" cy="-33" rx="28" ry="13" fill="#d7d10a"/><ellipse cx="0" cy="34" rx="28" ry="12" fill="#d7d10a"/><ellipse cx="0" cy="39" rx="17" ry="8" fill="#d7d10a"/><ellipse cx="-34" cy="0" rx="11.5" ry="29" fill="#d7d10a"/><ellipse cx="34" cy="0" rx="11.5" ry="29" fill="#d7d10a"/><circle cx="-21" cy="-21" r="14.5" fill="#d7d10a" stroke="#fff" stroke-width="1.5"/><circle cx="-21" cy="21" r="14.5" fill="#d7d10a" stroke="#fff" stroke-width="1.5"/><circle cx="21" cy="-21" r="14.5" fill="#d7d10a" stroke="#fff" stroke-width="1.5"/><circle cx="21" cy="21" r="14.5" fill="#d7d10a" stroke="#fff" stroke-width="1.5"/><circle cx="-32" cy="-32" r="4.5" fill="#fff"/><circle cx="-32" cy="32" r="4.5" fill="#fff"/><circle cx="32" cy="-32" r="4.5" fill="#fff"/><circle cx="32" cy="32" r="4.5" fill="#fff"/><circle r="20.5" fill="#d7d10a"/><path d="M0,-11 L4.5,-16.5 L0,-22 L-4.5,-16.5 Z" fill="#fff" transform="rotate(45)"/><path d="M0,-11 L4.5,-16.5 L0,-22 L-4.5,-16.5 Z" fill="#fff" transform="rotate(135)"/><path d="M0,-11 L4.5,-16.5 L0,-22 L-4.5,-16.5 Z" fill="#fff" transform="rotate(225)"/><path d="M0,-11 L4.5,-16.5 L0,-22 L-4.5,-16.5 Z" fill="#fff" transform="rotate(315)"/><circle r="11.5" fill="none" stroke="#fff" stroke-width="1.3"/><path d="M0,-10 L3.5,-16 L0,-21 L-3.5,-16 Z" fill="#fff" transform="rotate(0)"/><path d="M0,-10 L3.5,-16 L0,-21 L-3.5,-16 Z" fill="#fff" transform="rotate(90)"/><path d="M0,-10 L3.5,-16 L0,-21 L-3.5,-16 Z" fill="#fff" transform="rotate(180)"/><path d="M0,-10 L3.5,-16 L0,-21 L-3.5,-16 Z" fill="#fff" transform="rotate(270)"/><circle cx="-6" cy="-17" r="3.6" fill="#fff"/><circle cx="-6" cy="-17" r="1.8" fill="#d7d10a"/><circle cx="-17" cy="-6" r="3.6" fill="#fff"/><circle cx="-17" cy="-6" r="1.8" fill="#d7d10a"/><path d="M-8,-28 Q-20,-33 -29,-30 Q-33,-20 -28,-8" fill="none" stroke="#fff" stroke-width="1.1" opacity="0.85"/><path d="M-14,-26 Q-22,-22 -26,-14" fill="none" stroke="#fff" stroke-width="0.9" opacity="0.7"/><circle cx="-9" cy="37" r="3" fill="none" stroke="#fff" stroke-width="1.3"/><circle cx="37" cy="-9" r="3" fill="none" stroke="#fff" stroke-width="1.3"/><circle cx="-6" cy="17" r="3.6" fill="#fff"/><circle cx="-6" cy="17" r="1.8" fill="#d7d10a"/><circle cx="-17" cy="6" r="3.6" fill="#fff"/><circle cx="-17" cy="6" r="1.8" fill="#d7d10a"/><path d="M-8,28 Q-20,33 -29,30 Q-33,20 -28,8" fill="none" stroke="#fff" stroke-width="1.1" opacity="0.85"/><path d="M-14,26 Q-22,22 -26,14" fill="none" stroke="#fff" stroke-width="0.9" opacity="0.7"/><circle cx="-9" cy="-37" r="3" fill="none" stroke="#fff" stroke-width="1.3"/><circle cx="37" cy="9" r="3" fill="none" stroke="#fff" stroke-width="1.3"/><circle cx="6" cy="-17" r="3.6" fill="#fff"/><circle cx="6" cy="-17" r="1.8" fill="#d7d10a"/><circle cx="17" cy="-6" r="3.6" fill="#fff"/><circle cx="17" cy="-6" r="1.8" fill="#d7d10a"/><path d="M8,-28 Q20,-33 29,-30 Q33,-20 28,-8" fill="none" stroke="#fff" stroke-width="1.1" opacity="0.85"/><path d="M14,-26 Q22,-22 26,-14" fill="none" stroke="#fff" stroke-width="0.9" opacity="0.7"/><circle cx="9" cy="37" r="3" fill="none" stroke="#fff" stroke-width="1.3"/><circle cx="-37" cy="-9" r="3" fill="none" stroke="#fff" stroke-width="1.3"/><circle cx="6" cy="17" r="3.6" fill="#fff"/><circle cx="6" cy="17" r="1.8" fill="#d7d10a"/><circle cx="17" cy="6" r="3.6" fill="#fff"/><circle cx="17" cy="6" r="1.8" fill="#d7d10a"/><path d="M8,28 Q20,33 29,30 Q33,20 28,8" fill="none" stroke="#fff" stroke-width="1.1" opacity="0.85"/><path d="M14,26 Q22,22 26,14" fill="none" stroke="#fff" stroke-width="0.9" opacity="0.7"/><circle cx="9" cy="-37" r="3" fill="none" stroke="#fff" stroke-width="1.3"/><circle cx="-37" cy="9" r="3" fill="none" stroke="#fff" stroke-width="1.3"/><path d="M-30,0 Q-36,-3 -42,0 Q-36,3 -30,0 Z M30,0 Q36,-3 42,0 Q36,3 30,0 Z M0,-24 Q-2,-34 0,-44 Q2,-34 0,-24 Z" fill="none" stroke="#fff" stroke-width="1.1"/><circle r="9" fill="none" stroke="#fff" stroke-width="1" opacity="0.7"/><circle r="5" fill="none" stroke="#fff" stroke-width="1.4"/></svg>
<div class="t" style="left:1247.75px;top:557.17px;font-family:'Liberation Serif',serif;font-weight:normal;font-size:19.5px;letter-spacing:0.000px;color:#151515;-webkit-text-stroke:0.55px #151515;">Sample text</div>
<div class="t" style="left:1254.25px;top:580.97px;font-family:'Liberation Serif',serif;font-weight:normal;font-size:19.5px;letter-spacing:0.000px;color:#151515;-webkit-text-stroke:0.55px #151515;">Element 6</div>
<div class="card" style="left:1197.75px;top:655px"></div>
<svg class="a" style="left:1247.8px;top:663.1px" width="92" height="92" viewBox="0 0 91.6 92"><rect width="91.6" height="92" fill="#cdcdcd"/><g fill="#555"><path d="M2.4,7.1 L7.4,1.6 L22.9,17.9 L18.4,18.4 L18.9,23.4 Z"/><path d="M2.4,7.1 L7.4,1.6 L22.9,17.9 L18.4,18.4 L18.9,23.4 Z" transform="translate(91.6,0) scale(-1,1)"/><path d="M2.4,7.1 L7.4,1.6 L22.9,17.9 L18.4,18.4 L18.9,23.4 Z" transform="translate(0,92) scale(1,-1)"/><path d="M2.4,7.1 L7.4,1.6 L22.9,17.9 L18.4,18.4 L18.9,23.4 Z" transform="translate(91.6,92) scale(-1,-1)"/><circle cx="53.8" cy="39.2" r="3.3"/><path d="M27,58.5 L38.2,43.3 L47.3,54.5 L54.5,48.4 L65.2,59.6 L65.2,62.4 L27,62.4 Z"/></g><rect x="25.1" y="30" width="41.9" height="32.4" fill="none" stroke="#555" stroke-width="4"/></svg>
<div class="t" style="left:1247.75px;top:771.17px;font-family:'Liberation Serif',serif;font-weight:normal;font-size:19.5px;letter-spacing:0.000px;color:#151515;-webkit-text-stroke:0.55px #151515;">Sample text</div>
<div class="t" style="left:1249.38px;top:795.37px;font-family:'Liberation Serif',serif;font-weight:normal;font-size:19.5px;letter-spacing:0.000px;color:#151515;-webkit-text-stroke:0.55px #151515;">Element 12</div>
<svg class="a" style="left:120px;top:500px" width="210" height="140" viewBox="120 500 210 140"><g fill="none" stroke="#8eaad6" stroke-width="1.3"><rect x="136.5" y="557.4" width="173" height="67.1"/><line x1="223.3" y1="499" x2="223.3" y2="566"/><rect x="129.5" y="550" width="16.3" height="16.3"/><rect x="129.5" y="583.2" width="16.3" height="16.3"/><rect x="129.5" y="615.9" width="16.3" height="16.3"/><rect x="215.2" y="550" width="16.3" height="16.3"/><rect x="215.2" y="615.9" width="16.3" height="16.3"/><rect x="300.4" y="550" width="16.3" height="16.3"/><rect x="300.4" y="583.2" width="16.3" height="16.3"/><rect x="300.4" y="615.9" width="16.3" height="16.3"/></g></svg>
<svg class="a" style="left:1447px;top:140px" width="50" height="50" viewBox="1447 140 50 50"><circle cx="1471.6" cy="163.9" r="23.9" fill="#5fac67"/><path d="M1465.3,150.8 L1476.6,162.6 L1465.3,174.4" fill="none" stroke="#f0f6f0" stroke-width="1.6"/></svg>
<div class="a" id="strip"></div>
<div class="a" id="panel"></div>
<div class="a" id="sbar"></div>
<div class="a" id="thumb"></div>
<div class="a" id="side"></div>
<div class="a" id="sideedit"></div>
<div class="t" style="left:1535.70px;top:143.99px;font-family:'Liberation Sans',sans-serif;font-weight:normal;font-size:26px;letter-spacing:0.306px;color:#cfcfd1;transform:scaleX(1.0893);transform-origin:0 0;">Edit</div>
<div class="t" style="left:1534.00px;top:180.76px;font-family:'Liberation Sans',sans-serif;font-weight:normal;font-size:18px;letter-spacing:0.315px;color:#c2c2c4;transform:scaleX(1.1630);transform-origin:0 0;">Im Rahmen doppelklicken, um den Text</div>
<div class="t" style="left:1534.00px;top:208.46px;font-family:'Liberation Sans',sans-serif;font-weight:normal;font-size:18px;letter-spacing:0.291px;color:#c2c2c4;transform:scaleX(1.1406);transform-origin:0 0;">zu ändern.</div>
<div class="dash" style="top:250.5px"></div>
<div class="dash" style="top:474px"></div>
<div class="dash" style="top:617px"></div>
<div class="dash" style="top:733.5px"></div>
<div class="dash" style="top:885.3px"></div>
<div class="dash" style="top:1038.6px"></div>
<div class="t" style="left:1535.70px;top:279.29px;font-family:'Liberation Sans',sans-serif;font-weight:normal;font-size:26px;letter-spacing:0.380px;color:#cfcfd1;transform:scaleX(1.0961);transform-origin:0 0;">Font</div>
<div class="sel" style="left:1533px;top:327px;width:400px;height:47px"></div>
<div class="t" style="left:1548.00px;top:338.67px;font-family:'Liberation Serif',serif;font-weight:normal;font-size:19.5px;letter-spacing:-0.044px;color:#f2f2f2;-webkit-text-stroke:0.45px #f2f2f2;">Minion Pro</div>
<div class="sel" style="left:1592px;top:389.5px;width:133px;height:47.5px"></div>
<div class="t" style="left:1605.00px;top:403.54px;font-family:'Liberation Sans',sans-serif;font-weight:normal;font-size:18.5px;letter-spacing:-0.500px;color:#f0f0f0;">12</div>
<div class="sel" style="left:1797px;top:389.5px;width:136px;height:47.5px"></div>
<div class="t" style="left:1811.70px;top:403.34px;font-family:'Liberation Sans',sans-serif;font-weight:normal;font-size:18.5px;letter-spacing:0.419px;color:#f0f0f0;transform:scaleX(1.1524);transform-origin:0 0;">Auto</div>
<div class="t" style="left:1534.40px;top:502.57px;font-family:'Liberation Sans',sans-serif;font-weight:normal;font-size:26.5px;letter-spacing:0.308px;color:#cfcfd1;transform:scaleX(1.1082);transform-origin:0 0;">change text color</div>
<div class="t" style="left:1534.00px;top:645.57px;font-family:'Liberation Sans',sans-serif;font-weight:normal;font-size:26.5px;letter-spacing:0.339px;color:#cfcfd1;transform:scaleX(1.1096);transform-origin:0 0;">change transparency</div>
<div class="t" style="left:1897.00px;top:696.27px;font-family:'Liberation Sans',sans-serif;font-weight:normal;font-size:13.5px;letter-spacing:0.400px;color:#cfcfcf;">100%</div>
<div class="t" style="left:1533.70px;top:762.07px;font-family:'Liberation Sans',sans-serif;font-weight:normal;font-size:26.5px;letter-spacing:0.320px;color:#cfcfd1;transform:scaleX(1.1220);transform-origin:0 0;">Align horizontally</div>
<div class="t" style="left:1534.00px;top:915.17px;font-family:'Liberation Sans',sans-serif;font-weight:normal;font-size:26.5px;letter-spacing:0.280px;color:#cfcfd1;transform:scaleX(1.1103);transform-origin:0 0;">Align vertically</div>
<div class="t" style="left:1536.00px;top:1066.57px;font-family:'Liberation Sans',sans-serif;font-weight:normal;font-size:26.5px;letter-spacing:0.073px;color:#cfcfd1;transform:scaleX(1.0220);transform-origin:0 0;">Lists</div>
<div class="t" style="left:2000.70px;top:199.70px;font-family:'Liberation Sans',sans-serif;font-weight:normal;font-size:13px;letter-spacing:0.243px;color:#d2d2d3;transform:scaleX(1.1500);transform-origin:0 0;">Edit</div>
<div class="t" style="left:1993.30px;top:319.70px;font-family:'Liberation Sans',sans-serif;font-weight:normal;font-size:13px;letter-spacing:0.219px;color:#bdbdbf;transform:scaleX(1.1053);transform-origin:0 0;">Pages</div>
<div class="t" style="left:1992.70px;top:439.60px;font-family:'Liberation Sans',sans-serif;font-weight:normal;font-size:13px;letter-spacing:0.283px;color:#bdbdbf;transform:scaleX(1.1400);transform-origin:0 0;">Forms</div>
<svg class="ic" style="left:0;top:0" width="2083" height="1081" viewBox="0 0 2083 1081">
<g style="stroke:#2f7fe0;stroke-width:2.2;stroke-linecap:butt;stroke-linejoin:miter">
<path d="M1897,347.5 L1904.2,355.5 L1911.5,347.5"/>
<path d="M1690.5,410 L1697.7,418 L1705,410"/>
<path d="M1897,410 L1904.2,418 L1911.5,410"/>
</g>
<g style="stroke:#e6e6e6;stroke-width:1.6;stroke-linejoin:miter;stroke-linecap:butt">
<path d="M1536,425.5 L1548.5,396.5 L1561.5,425.5 M1540.5,415 H1557"/>
<path d="M1560.5,425.5 L1567.5,409.5 L1574.3,425.5 M1563,419.5 H1572"/>
<path d="M1742,425.5 L1754.5,396.5 L1767.5,425.5 M1746.5,415 H1763"/>
<path d="M1775.5,397.5 V425 M1771.5,401.5 L1775.5,397 L1779.5,401.5 M1771.5,421 L1775.5,425.5 L1779.5,421"/>
</g>
<circle cx="1557" cy="574.5" r="23.5" style="fill:#000;stroke:#dedede;stroke-width:1.6"/>
<circle cx="1909.5" cy="572" r="16.2" style="stroke:#d8d8d8;stroke-width:1.5"/>
<path d="M1909.5,566.5 V583" style="stroke:#d8d8d8;stroke-width:1.6"/>
<circle cx="1909.5" cy="562.3" r="1" style="fill:#d8d8d8;stroke:#d8d8d8;stroke-width:0.8"/>
<path d="M1533,703.7 H1852" style="stroke:#f2f2f2;stroke-width:2.2;stroke-linecap:butt"/>
<circle cx="1861" cy="703.6" r="9" style="fill:#424146;stroke:#f0f0f0;stroke-width:1.8"/>
<g style="stroke:#cfcfcf;stroke-width:2.4;stroke-linecap:butt">
<path d="M1541,819.4 H1569 M1541,826.7 H1565 M1541,834 H1560 M1541,841.2 H1569"/>
<path d="M1606,819.4 H1634 M1611,826.7 H1629 M1608,834 H1632 M1606,841.2 H1634" style="stroke:#a9a9aa"/>
<path d="M1671.4,819.4 H1699.8 M1681,826.7 H1699.8 M1675,834 H1699.8 M1671.4,841.2 H1699.8"/>
<path d="M1737,819.4 H1765 M1737,826.7 H1765 M1737,834 H1765 M1737,841.2 H1765"/>
</g>
<g style="stroke:#a9a9aa;stroke-width:2">
<rect x="1542" y="966.5" width="26" height="33.2" rx="2.5"/>
<rect x="1607.2" y="966.5" width="26" height="33.2" rx="2.5"/>
<rect x="1672.5" y="966.5" width="26" height="33.2" rx="2.5"/>
<path d="M1546,970.2 H1564 M1546,975.7 H1564 M1546,981.1 H1564" style="stroke-width:1.8"/>
<path d="M1611.7,977.7 H1629 M1611.7,983.1 H1629 M1611.7,988.6 H1629" style="stroke-width:1.8"/>
<path d="M1677,984.8 H1694.4 M1677,990.2 H1694.4 M1677,995.4 H1694.4" style="stroke-width:1.8"/>
</g>
</svg>
<div class="a" style="left:1925px;top:121px;width:20px;height:960px;background:#f8f8f8"></div>
<div class="a" id="thumb"></div>
<div class="a" style="left:1925px;top:121px;width:0px;height:960px;"></div>
<svg class="ic" style="left:0;top:0" width="2083" height="1081" viewBox="0 0 2083 1081">
<g style="stroke:#e4e4e4;stroke-width:1.8">
<path d="M2016.8,152.3 H2003.5 Q2001.5,152.3 2001.5,154.3 V182.6 Q2001.5,184.6 2003.5,184.6 H2025.3 Q2027.3,184.6 2027.3,182.6 V160.5"/>
<path d="M2008.3,168.6 L2010,162.5 L2020.5,152 Q2023,149.5 2025.5,152 Q2028,154.5 2025.5,157 L2015,167.3 Z"/>
</g>
<g style="stroke:#d2d2d2;stroke-width:1.7">
<path d="M2000.6,270.9 L2013.9,278.5 L2027.4,270.9 V297 L2013.9,303.7 L2000.6,297 Z M2013.9,278.5 V303.7"/>
<path d="M2000.6,275.8 H1996.6 V300 Q1996.6,302.2 2000,302.7 L2013.9,305.3 L2027.8,302.7 Q2031.3,302.2 2031.3,300 V275.8 H2027.4"/>
</g>
<g style="stroke:#cfcfcf;stroke-width:1.7">
<rect x="1998.5" y="393" width="13.5" height="14" rx="2"/>
<circle cx="2023.3" cy="400" r="7.3"/>
<path d="M2002.3,410.5 H2008.8 L2012.3,416.8 L2008.8,423 H2002.3 L1998.6,416.8 Z"/>
<path d="M2022.2,411.6 Q2023.7,409.5 2025.2,411.6 L2030.6,421 Q2031.6,423 2029.4,423 H2018 Q2015.8,423 2016.8,421 Z"/>
</g>
<path d="M2003,1081 V1079 L2005,1075 L2009,1077 L2011,1073.5 H2017 L2019,1077 L2023,1075 L2025,1079 V1081" style="stroke:#d8d8d8;stroke-width:1.8"/>
</svg>
<div class="a" style="left:2082px;top:0;width:1px;height:1081px;background:rgba(255,255,255,0.17)"></div>
<div class="a" style="left:0;top:1080px;width:2082px;height:1px;background:rgba(255,255,255,0.15)"></div>
</body></html>
